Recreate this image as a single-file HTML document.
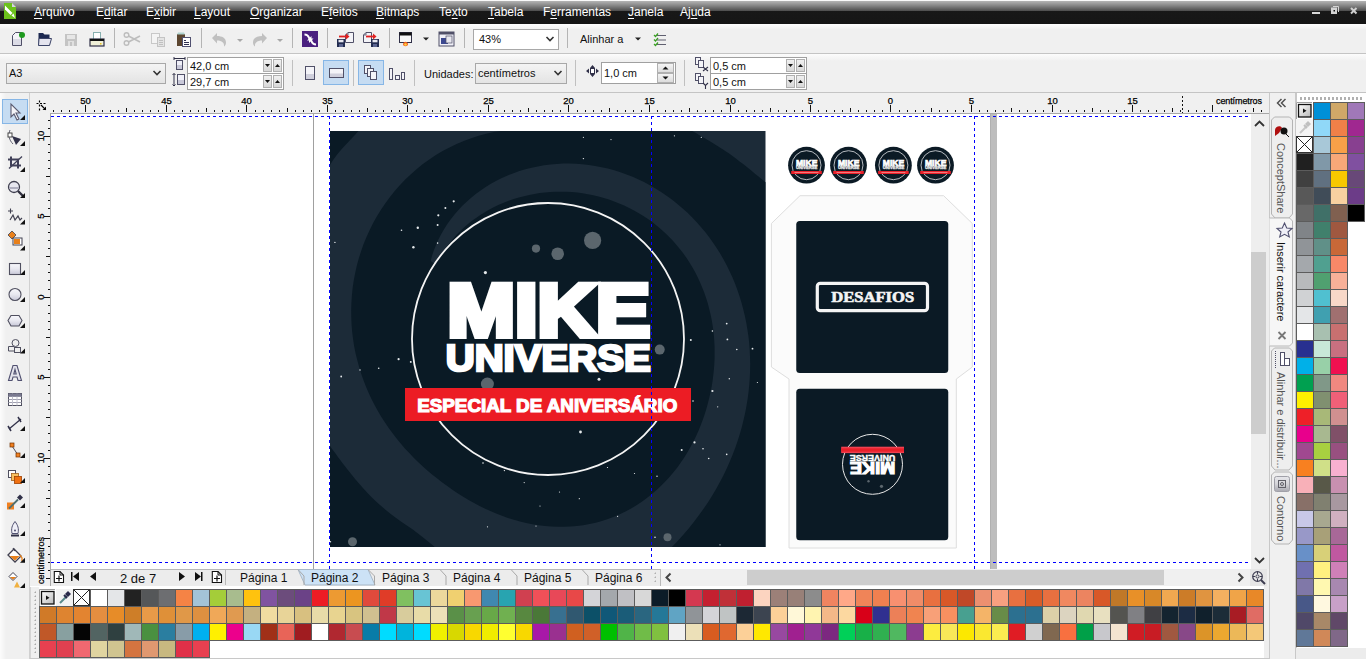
<!DOCTYPE html><html><head><meta charset="utf-8"><style>
html,body{margin:0;padding:0;} body{width:1366px;height:659px;overflow:hidden;position:relative;background:#f0f0f0;font-family:"Liberation Sans", sans-serif;}
div,svg{box-sizing:border-box;} u{text-decoration:underline;text-underline-offset:1.5px;text-decoration-thickness:1px;}
</style></head><body>
<div style="position:absolute;left:0px;top:0px;width:1366px;height:24px;background:linear-gradient(#fafafa 0px,#fafafa 1px,#b4b4b4 1px,#8c8c8c 5px,#4c4c4c 11px,#181818 11px,#161616 24px);"></div>
<div style="position:absolute;left:34px;top:5px;font-size:12px;line-height:14px;color:#ffffff;white-space:nowrap;line-height:14px;"><u>A</u>rquivo</div>
<div style="position:absolute;left:96px;top:5px;font-size:12px;line-height:14px;color:#ffffff;white-space:nowrap;line-height:14px;">E<u>d</u>itar</div>
<div style="position:absolute;left:146px;top:5px;font-size:12px;line-height:14px;color:#ffffff;white-space:nowrap;line-height:14px;">E<u>x</u>ibir</div>
<div style="position:absolute;left:194px;top:5px;font-size:12px;line-height:14px;color:#ffffff;white-space:nowrap;line-height:14px;"><u>L</u>ayout</div>
<div style="position:absolute;left:250px;top:5px;font-size:12px;line-height:14px;color:#ffffff;white-space:nowrap;line-height:14px;"><u>O</u>rganizar</div>
<div style="position:absolute;left:321px;top:5px;font-size:12px;line-height:14px;color:#ffffff;white-space:nowrap;line-height:14px;">E<u>f</u>eitos</div>
<div style="position:absolute;left:376px;top:5px;font-size:12px;line-height:14px;color:#ffffff;white-space:nowrap;line-height:14px;"><u>B</u>itmaps</div>
<div style="position:absolute;left:439px;top:5px;font-size:12px;line-height:14px;color:#ffffff;white-space:nowrap;line-height:14px;">Te<u>x</u>to</div>
<div style="position:absolute;left:488px;top:5px;font-size:12px;line-height:14px;color:#ffffff;white-space:nowrap;line-height:14px;"><u>T</u>abela</div>
<div style="position:absolute;left:543px;top:5px;font-size:12px;line-height:14px;color:#ffffff;white-space:nowrap;line-height:14px;">F<u>e</u>rramentas</div>
<div style="position:absolute;left:628px;top:5px;font-size:12px;line-height:14px;color:#ffffff;white-space:nowrap;line-height:14px;"><u>J</u>anela</div>
<div style="position:absolute;left:680px;top:5px;font-size:12px;line-height:14px;color:#ffffff;white-space:nowrap;line-height:14px;">Aj<u>u</u>da</div>
<svg style="position:absolute;left:3px;top:3px;" width="16" height="18" viewBox="0 0 16 18"><path d="M1 0 H9 L13 4 V16 H1 Z" fill="#6cc21c"/><path d="M9 0 L13 4 H9 Z" fill="#d8d0e8"/><path d="M2 2.5 L9.5 10 L7.5 12 L2 6.5 Z" fill="#fff"/><path d="M3.5 3 L9 8.5" stroke="#6cc21c" stroke-width="0.9"/><path d="M8.5 12.5 L10.5 10.5 L12 15 Z" fill="#fff"/></svg>
<svg style="position:absolute;left:1308px;top:4px;" width="58" height="16" viewBox="0 0 58 16"><rect x="4" y="8" width="8" height="2" fill="#d8d8d8"/><rect x="23" y="3.5" width="6" height="6.5" fill="#d4d4d4"/><rect x="25.5" y="6" width="1.5" height="1.5" fill="#111"/><path d="M25 2.5 H30.5 V8" fill="none" stroke="#d4d4d4" stroke-width="1"/><path d="M43 4 L48.5 9.5 M48.5 4 L43 9.5" stroke="#d0d0d0" stroke-width="2"/></svg>
<div style="position:absolute;left:0px;top:24px;width:1366px;height:30px;background:linear-gradient(#fefefe 0px,#f0f0f0 6px,#f0f0f0 100%);border-bottom:1px solid #c4c4c4;"></div>
<div style="position:absolute;left:0px;top:54px;width:1366px;height:39px;background:linear-gradient(#fcfcfc 0px,#f0f0f0 7px,#f0f0f0 100%);border-bottom:1px solid #c4c4c4;"></div>
<svg style="position:absolute;left:0px;top:24px;" width="700" height="30" viewBox="0 0 700 30"><path d="M12.5 35.5 L15.5 32.5 H21.5 V45.5 H12.5 Z" transform="translate(0,-24)" fill="#f4f4f8" stroke="#505068" stroke-width="1"/><rect x="13" y="15" width="8" height="6" fill="#dcdce6"/><circle cx="22" cy="11" r="3" fill="#1e9a1e"/><path d="M38.5 9 H43 L44.5 10.5 H49.5 V21.5 H38.5 Z" fill="#1c2850"/><path d="M39 14.5 H51.5 L49.5 21.5 H38.5 Z" fill="#e4e4ee" stroke="#3c4468" stroke-width="1"/><rect x="65" y="10" width="12" height="12" fill="#c4c4c4"/><rect x="67" y="11" width="8" height="4" fill="#e6e6e6"/><rect x="68" y="17" width="6" height="5" fill="#e0e0e0"/><rect x="70" y="18" width="2" height="4" fill="#c4c4c4"/><rect x="93.5" y="8.5" width="7" height="7" fill="#fff" stroke="#88b0b0" stroke-width="1"/><rect x="90" y="15" width="14" height="7" fill="#f0f0d8" stroke="#303048" stroke-width="1.2"/><rect x="90" y="15" width="14" height="2" fill="#111"/><rect x="100" y="19" width="1.5" height="1.5" fill="#e8c020"/><rect x="114" y="4" width="1" height="20" fill="#b4b4b4"/><circle cx="126.5" cy="11" r="2.3" fill="none" stroke="#bdbdbd" stroke-width="1.4"/><circle cx="126.5" cy="19" r="2.3" fill="none" stroke="#bdbdbd" stroke-width="1.4"/><path d="M128.5 12 L140 18 M128.5 18 L140 12" stroke="#bdbdbd" stroke-width="1.6"/><rect x="151.5" y="9.5" width="8" height="10" fill="#f4f4f4" stroke="#c8c8c8"/><rect x="157.5" y="13.5" width="7" height="9" fill="#e4e4e4" stroke="#c4c4c4"/><path d="M159 16.5 H163 M159 18.5 H163 M159 20.5 H163" stroke="#c0c0c0"/><rect x="177" y="10" width="8" height="12" fill="#5c4630"/><path d="M178 8.5 H184 L185 10.5 H177 Z" fill="#b0d4d0"/><rect x="182.5" y="13.5" width="8" height="9" fill="#fff" stroke="#505070" stroke-width="1"/><path d="M184 16.5 H186 M184 18.5 H189 M184 20.5 H189" stroke="#303050"/><rect x="201" y="4" width="1" height="20" fill="#b4b4b4"/><path d="M212 14 L217 9 V12 C222 12 226 14 226 18.5 C226 20.5 225 22 224 22.5 C224.5 19 222 16.5 217 16.5 V19.5 Z" fill="#c0c0c0"/><path d="M237 15 H243 L240 18 Z" fill="#a8a8a8"/><path d="M267 14 L262 9 V12 C257 12 253 14 253 18.5 C253 20.5 254 22 255 22.5 C254.5 19 257 16.5 262 16.5 V19.5 Z" fill="#c0c0c0"/><path d="M277 15 H283 L280 18 Z" fill="#a8a8a8"/><rect x="292" y="4" width="1" height="20" fill="#b4b4b4"/><rect x="302" y="7" width="16" height="16" fill="#4a2080"/><path d="M304.5 9.5 C307 9.5 309 11 310 13.5 L311.5 12 L311.5 16.5 L307 16.5 L308.5 15 C307.5 12.5 306.5 11.5 304.5 11.5 Z" fill="#fff"/><path d="M315.5 20.5 C313 20.5 311 19 310 16.5 L308.5 18 L308.5 13.5 L313 13.5 L311.5 15 C312.5 17.5 313.5 18.5 315.5 18.5 Z" fill="#fff" transform="translate(0.5,1)"/><rect x="327" y="4" width="1" height="20" fill="#b4b4b4"/><path d="M345.5 11 L348 8.5 H353.5 V18.5 H345.5 Z" fill="#f4f4f8" stroke="#505068" stroke-width="1"/><path d="M345.5 11 H348 V8.5" fill="none" stroke="#505068" stroke-width="0.8"/><rect x="337" y="15" width="8" height="8" fill="#222c50"/><rect x="338.5" y="15.8" width="5" height="2.5" fill="#e8e8f0"/><rect x="339" y="20" width="4" height="3" fill="#5a6490"/><path d="M339 12.5 H347" stroke="#e02020" stroke-width="1.8"/><path d="M346 9.5 L349.5 12.5 L346 15.5 Z" fill="#e02020"/><path d="M363.5 11 L366 8.5 H371.5 V18.5 H363.5 Z" fill="#f4f4f8" stroke="#505068" stroke-width="1"/><path d="M363.5 11 H366 V8.5" fill="none" stroke="#505068" stroke-width="0.8"/><rect x="371" y="15" width="8" height="8" fill="#222c50"/><rect x="372.5" y="15.8" width="5" height="2.5" fill="#e8e8f0"/><rect x="373" y="20" width="4" height="3" fill="#5a6490"/><path d="M366 12.5 H374" stroke="#e02020" stroke-width="1.8"/><path d="M373 9.5 L376.5 12.5 L373 15.5 Z" fill="#e02020"/><rect x="389" y="4" width="1" height="20" fill="#b4b4b4"/><rect x="399.5" y="8.5" width="12" height="10" fill="#f8f8f8" stroke="#303048" stroke-width="1"/><rect x="399.5" y="8.5" width="12" height="3" fill="#111"/><path d="M403 20 C404 17 407 17 408 20 C408 23 403 23 403 20 Z" fill="#f06020"/><circle cx="405.5" cy="20.5" r="1.3" fill="#ffd040"/><path d="M423 13.5 H429 L426 16.5 Z" fill="#222"/><rect x="439" y="8" width="15" height="14" fill="#f0f0f8" stroke="#505068" stroke-width="1"/><rect x="439" y="8" width="15" height="2.5" fill="#505068"/><rect x="441" y="14" width="7" height="6" fill="#3c4890"/><rect x="446" y="12" width="6" height="7" fill="#e8e8f0" stroke="#505068" stroke-width="0.7"/><rect x="464" y="4" width="1" height="20" fill="#b4b4b4"/><rect x="567" y="4" width="1" height="20" fill="#b4b4b4"/><path d="M635 13.5 H641 L638 16.5 Z" fill="#222"/><path d="M654 11 L655.5 12.5 L658 9.5 M654 15.5 L655.5 17 L658 14 M654 20 L655.5 21.5 L658 18.5" fill="none" stroke="#38a020" stroke-width="1.2"/><path d="M657 11.5 H666 M657 16 H666 M657 20.5 H666" stroke="#606070" stroke-width="1"/></svg>
<div style="position:absolute;left:473px;top:29px;width:86px;height:21px;background:#fff;border:1px solid #a8a8a8;"></div>
<div style="position:absolute;left:479px;top:32px;font-size:11px;line-height:13px;color:#111;white-space:nowrap;line-height:14px;">43%</div>
<svg style="position:absolute;left:545px;top:34px;" width="10" height="10" viewBox="0 0 10 10"><path d="M1.5 3 L5 6.5 L8.5 3" fill="none" stroke="#333" stroke-width="1.6"/></svg>
<div style="position:absolute;left:580px;top:32px;font-size:11px;line-height:13px;color:#111;white-space:nowrap;line-height:14px;">Alinhar a</div>
<div style="position:absolute;left:6px;top:63px;width:160px;height:21px;background:linear-gradient(#f4f4f4,#e4e4e4);border:1px solid #a8a8a8;"></div><div style="position:absolute;left:9px;top:66px;font-size:11px;line-height:13px;color:#111;white-space:nowrap;line-height:14px;">A3</div><svg style="position:absolute;left:152px;top:69px;" width="10" height="8" viewBox="0 0 10 8"><path d="M1.5 2 L5 5.5 L8.5 2" fill="none" stroke="#333" stroke-width="1.6"/></svg>
<div style="position:absolute;left:187px;top:57px;width:97px;height:33px;background:#fff;border:1px solid #a0a0a0;"></div><div style="position:absolute;left:187px;top:73px;width:97px;height:1px;background:#a0a0a0;"></div><div style="position:absolute;left:190px;top:59px;font-size:11px;line-height:13px;color:#111;white-space:nowrap;line-height:14px;">42,0 cm</div><div style="position:absolute;left:190px;top:75px;font-size:11px;line-height:13px;color:#111;white-space:nowrap;line-height:14px;">29,7 cm</div><div style="position:absolute;left:263px;top:59px;width:9px;height:13px;background:linear-gradient(#f0f0f0,#d8d8d8);border:1px solid #b0b0b0;"></div><div style="position:absolute;left:273px;top:59px;width:9px;height:13px;background:linear-gradient(#f0f0f0,#d8d8d8);border:1px solid #b0b0b0;"></div><svg style="position:absolute;left:263px;top:59px;" width="20" height="13" viewBox="0 0 20 13"><path d="M2 5 H7 L4.5 8 Z" fill="#111"/><path d="M12 8 H17 L14.5 5 Z" fill="#111"/></svg><div style="position:absolute;left:263px;top:75px;width:9px;height:13px;background:linear-gradient(#f0f0f0,#d8d8d8);border:1px solid #b0b0b0;"></div><div style="position:absolute;left:273px;top:75px;width:9px;height:13px;background:linear-gradient(#f0f0f0,#d8d8d8);border:1px solid #b0b0b0;"></div><svg style="position:absolute;left:263px;top:75px;" width="20" height="13" viewBox="0 0 20 13"><path d="M2 5 H7 L4.5 8 Z" fill="#111"/><path d="M12 8 H17 L14.5 5 Z" fill="#111"/></svg>
<div style="position:absolute;left:710px;top:57px;width:97px;height:33px;background:#fff;border:1px solid #a0a0a0;"></div><div style="position:absolute;left:710px;top:73px;width:97px;height:1px;background:#a0a0a0;"></div><div style="position:absolute;left:713px;top:59px;font-size:11px;line-height:13px;color:#111;white-space:nowrap;line-height:14px;">0,5 cm</div><div style="position:absolute;left:713px;top:75px;font-size:11px;line-height:13px;color:#111;white-space:nowrap;line-height:14px;">0,5 cm</div><div style="position:absolute;left:786px;top:59px;width:9px;height:13px;background:linear-gradient(#f0f0f0,#d8d8d8);border:1px solid #b0b0b0;"></div><div style="position:absolute;left:796px;top:59px;width:9px;height:13px;background:linear-gradient(#f0f0f0,#d8d8d8);border:1px solid #b0b0b0;"></div><svg style="position:absolute;left:786px;top:59px;" width="20" height="13" viewBox="0 0 20 13"><path d="M2 5 H7 L4.5 8 Z" fill="#111"/><path d="M12 8 H17 L14.5 5 Z" fill="#111"/></svg><div style="position:absolute;left:786px;top:75px;width:9px;height:13px;background:linear-gradient(#f0f0f0,#d8d8d8);border:1px solid #b0b0b0;"></div><div style="position:absolute;left:796px;top:75px;width:9px;height:13px;background:linear-gradient(#f0f0f0,#d8d8d8);border:1px solid #b0b0b0;"></div><svg style="position:absolute;left:786px;top:75px;" width="20" height="13" viewBox="0 0 20 13"><path d="M2 5 H7 L4.5 8 Z" fill="#111"/><path d="M12 8 H17 L14.5 5 Z" fill="#111"/></svg>
<svg style="position:absolute;left:0px;top:54px;" width="820" height="38" viewBox="0 0 820 38"><rect x="176.5" y="6.5" width="6" height="9" fill="#f0f0f8" stroke="#505068" stroke-width="1"/><rect x="177" y="11" width="5" height="4" fill="#c8c8d8"/><path d="M174 4.5 H185 M174 3 V6 M185 3 V6" stroke="#303048" stroke-width="1"/><rect x="177.5" y="20.5" width="7" height="10" fill="#f0f0f8" stroke="#505068" stroke-width="1"/><rect x="178" y="26" width="6" height="4" fill="#c8c8d8"/><path d="M174 19.5 V32 M172.5 21 L174 19.5 L175.5 21 M172.5 30.5 L174 32 L175.5 30.5" fill="none" stroke="#303048" stroke-width="1"/><rect x="292" y="6" width="1" height="26" fill="#c0c0c0"/><rect x="305.5" y="12.5" width="9" height="13" fill="#f4f4f8" stroke="#505068" stroke-width="1"/><rect x="306" y="20" width="8" height="5" fill="#d0d0dc"/><rect x="323.5" y="6.5" width="25" height="24" fill="#c6dcf2" stroke="#86b6e6" stroke-width="1"/><rect x="329.5" y="14.5" width="14" height="9" fill="#f4f4f8" stroke="#505068" stroke-width="1"/><rect x="330" y="19.5" width="13" height="3.5" fill="#d0d0dc"/><rect x="353" y="6" width="1" height="26" fill="#c0c0c0"/><rect x="358.5" y="6.5" width="25" height="24" fill="#c6dcf2" stroke="#86b6e6" stroke-width="1"/><rect x="364.5" y="11.5" width="6" height="8" fill="#f4f4f8" stroke="#505068"/><rect x="367.5" y="14.5" width="6" height="8" fill="#f4f4f8" stroke="#505068"/><rect x="370.5" y="17.5" width="6" height="8" fill="#f4f4f8" stroke="#505068"/><rect x="389.5" y="14.5" width="3" height="11" fill="#f4f4f8" stroke="#505068"/><rect x="395.5" y="21.5" width="4" height="4" fill="#f4f4f8" stroke="#505068"/><rect x="401.5" y="18.5" width="3" height="7" fill="#f4f4f8" stroke="#505068"/><rect x="414" y="6" width="1" height="26" fill="#c0c0c0"/><rect x="575" y="6" width="1" height="26" fill="#c0c0c0"/><path d="M592.5 11 L590 14 H595 Z M592.5 23 L590 20 H595 Z M586 17 L589 14.5 V19.5 Z M599 17 L596 14.5 V19.5 Z" fill="#303048"/><rect x="590.5" y="14.5" width="4" height="5" fill="#fff" stroke="#303048" stroke-width="1"/><rect x="684" y="6" width="1" height="26" fill="#c0c0c0"/><rect x="695.5" y="3.5" width="5" height="7" fill="#f4f4f8" stroke="#505068"/><rect x="698.5" y="6.5" width="5" height="7" fill="#f4f4f8" stroke="#505068"/><rect x="695.5" y="19.5" width="5" height="7" fill="#f4f4f8" stroke="#505068"/><rect x="698.5" y="22.5" width="5" height="7" fill="#f4f4f8" stroke="#505068"/><path d="M703 13 L708 17 M708 13 L703 17" stroke="#303048" stroke-width="1.1"/><path d="M703 29 L705.5 31.5 L708 29 M705.5 31.5 V35" fill="none" stroke="#303048" stroke-width="1.1"/></svg>
<div style="position:absolute;left:424px;top:67px;font-size:11px;line-height:13px;color:#111;white-space:nowrap;line-height:14px;">Unidades:</div>
<div style="position:absolute;left:475px;top:63px;width:92px;height:21px;background:linear-gradient(#f4f4f4,#e4e4e4);border:1px solid #a8a8a8;"></div><div style="position:absolute;left:478px;top:66px;font-size:11px;line-height:13px;color:#111;white-space:nowrap;line-height:14px;">centímetros</div><svg style="position:absolute;left:553px;top:69px;" width="10" height="8" viewBox="0 0 10 8"><path d="M1.5 2 L5 5.5 L8.5 2" fill="none" stroke="#333" stroke-width="1.6"/></svg>
<div style="position:absolute;left:601px;top:62px;width:75px;height:22px;background:#fff;border:1px solid #a0a0a0;"></div>
<div style="position:absolute;left:604px;top:66px;font-size:11px;line-height:13px;color:#111;white-space:nowrap;line-height:14px;">1,0 cm</div>
<div style="position:absolute;left:657px;top:63px;width:17px;height:10px;background:linear-gradient(#f4f4f4,#dcdcdc);border:1px solid #b0b0b0;"></div>
<div style="position:absolute;left:657px;top:73px;width:17px;height:10px;background:linear-gradient(#f4f4f4,#dcdcdc);border:1px solid #b0b0b0;"></div>
<svg style="position:absolute;left:657px;top:63px;" width="17" height="20" viewBox="0 0 17 20"><path d="M5.5 6.5 H11.5 L8.5 3.5 Z" fill="#111"/><path d="M5.5 13.5 H11.5 L8.5 16.5 Z" fill="#111"/></svg>
<div style="position:absolute;left:0px;top:93px;width:30px;height:566px;background:linear-gradient(90deg,#fcfcfc 0px,#f0f0f0 6px,#f0f0f0 100%);border-right:1px solid #d0d0d0;"></div>
<svg style="position:absolute;left:0px;top:93px;" width="29" height="500" viewBox="0 0 29 500"><defs><linearGradient id="tbg" x1="0" y1="0" x2="0" y2="1"><stop offset="0" stop-color="#f8f8fc"/><stop offset="0.5" stop-color="#e8e8f0"/><stop offset="1" stop-color="#c8c8d8"/></linearGradient></defs><rect x="2.5" y="6.5" width="25" height="24" fill="#c6dcf2" stroke="#86b6e6" stroke-width="1"/><path d="M11 11 L11 24 L14 21 L17 27 L19 26 L16 20 L20 20 Z" fill="#f4f4f8" stroke="#5a5a70" stroke-width="1.1"/><path d="M25 27 H20 L25 22 Z" fill="#111"/><path d="M10 37 C8 42 9 47 13 51" fill="none" stroke="#606070" stroke-width="1"/><rect x="8" y="40" width="4" height="4" fill="#fff" stroke="#444" stroke-width="1"/><path d="M12 43 L21 46 L16 52 Z" fill="#303048"/><path d="M25 53 H20 L25 48 Z" fill="#111"/><g transform="translate(0,2.5)"><path d="M11 61 V70 H21 M8 64 H18 V73" fill="none" stroke="#404058" stroke-width="2"/><path d="M9 73 L22 61" stroke="#404058" stroke-width="1.3"/></g><path d="M25 79 H20 L25 74 Z" fill="#111"/><circle cx="14" cy="94" r="5.5" fill="#e8e8f0" stroke="#404050" stroke-width="1.3"/><path d="M9 95 H19" stroke="#b0b0c0" stroke-width="2"/><path d="M18 98 L23 103" stroke="#303040" stroke-width="2.4"/><path d="M25 105 H20 L25 100 Z" fill="#111"/><path d="M8 118 H13 M10.5 115.5 V120.5" stroke="#404050" stroke-width="1.1"/><path d="M10 127 L13 122 L15 127 L18 123 L20 127 L22 125" fill="none" stroke="#404050" stroke-width="1.2"/><path d="M25 131.5 H20 L25 126.5 Z" fill="#111"/><path d="M8 142 L12 138 L16 142 L12 146 Z" fill="#e8801a" stroke="#404050" stroke-width="0.8"/><rect x="13" y="145" width="9" height="7" fill="#fff" stroke="#404050" stroke-width="1"/><rect x="14" y="146" width="6" height="5" fill="#e8801a"/><path d="M25 157.5 H20 L25 152.5 Z" fill="#111"/><rect x="9.5" y="170.5" width="11" height="11" fill="url(#tbg)" stroke="#505060" stroke-width="1.1"/><path d="M25 182 H20 L25 177 Z" fill="#111"/><circle cx="15" cy="201.5" r="6" fill="url(#tbg)" stroke="#505060" stroke-width="1.1"/><path d="M25 209 H20 L25 204 Z" fill="#111"/><path d="M11 222.5 H19 L22 227.5 L19 233 H11 L8 227.5 Z" fill="url(#tbg)" stroke="#505060" stroke-width="1.1"/><path d="M25 235 H20 L25 230 Z" fill="#111"/><circle cx="15.5" cy="250" r="3.5" fill="#eee" stroke="#505060" stroke-width="1"/><path d="M8.5 253.5 H14 L16 258 H8.5 Z" fill="#eee" stroke="#505060" stroke-width="1"/><rect x="14.5" y="254.5" width="6" height="5" fill="#eee" stroke="#505060" stroke-width="1"/><path d="M25 260.5 H20 L25 255.5 Z" fill="#111"/><path d="M8.5 287.5 L13 272.5 H17 L21.5 287.5 H18 L17 284 H13 L12 287.5 Z M13.8 281 H16.2 L15 276.5 Z" fill="#e4e4ec" stroke="#505070" stroke-width="1.1"/><rect x="8.5" y="300.5" width="13" height="12" fill="#fff" stroke="#505060" stroke-width="1"/><path d="M8.5 303.5 H21.5 M8.5 306.5 H21.5 M8.5 309.5 H21.5" stroke="#a0a0b0" stroke-width="1"/><path d="M12.5 300.5 V312.5 M17 300.5 V312.5" stroke="#c0c0cc" stroke-width="1"/><rect x="8.5" y="300.5" width="13" height="3" fill="#7a7a90"/><g transform="translate(0,1)"><path d="M9 335 L21 325" stroke="#303048" stroke-width="1.3"/><path d="M8 332 L11 337 M18 323 L21 328" stroke="#303048" stroke-width="1.5"/><path d="M25 337 H20 L25 332 Z" fill="#111"/></g><g transform="translate(0,3)"><path d="M12 350 L18 359" stroke="#505060" stroke-width="1"/><rect x="10" y="347" width="4" height="4" fill="#f08020" stroke="#703000" stroke-width="0.7"/><rect x="16" y="357" width="4" height="4" fill="#f08020" stroke="#703000" stroke-width="0.7"/><path d="M25 362 H20 L25 357 Z" fill="#111"/></g><g transform="translate(0,2)"><rect x="8.5" y="375.5" width="7" height="7" fill="#fff" stroke="#505060" stroke-width="1"/><rect x="11.5" y="378.5" width="7" height="7" fill="#f8c060" stroke="#a06020" stroke-width="0.8"/><rect x="14.5" y="381.5" width="7" height="7" fill="#f07010" stroke="#a04000" stroke-width="0.8"/><path d="M25 388 H20 L25 383 Z" fill="#111"/></g><g transform="translate(0,7.5)"><rect x="7" y="402" width="7" height="7" fill="#f08020"/><path d="M9 408 L18 399" stroke="#507070" stroke-width="1.8"/><path d="M17 397 L20 394 L23 397 L20 400 Z" fill="#303048"/><path d="M25 407.5 H20 L25 402.5 Z" fill="#111"/></g><g transform="translate(0,7.5)"><path d="M15 421 C12 425 11 428 12 433 H18 C19 428 18 425 15 421 Z" fill="#f0f0f8" stroke="#505070" stroke-width="1"/><circle cx="15" cy="430" r="1" fill="#505070"/><rect x="11" y="434" width="8" height="2" fill="#303048"/><path d="M25 435.5 H20 L25 430.5 Z" fill="#111"/></g><g transform="translate(0,7)"><path d="M8 455 L14 449 L21 456 L15 462 Z" fill="#fff" stroke="#404050" stroke-width="1.3"/><path d="M9.5 456 H19.5 L15 460.5 Z" fill="#e8801a"/><path d="M20 455 L22 458 V461" stroke="#e8801a" stroke-width="1.3" fill="none"/><path d="M13 448 L15 451" stroke="#404050" stroke-width="1.2"/><path d="M25 462.7 H20 L25 457.7 Z" fill="#111"/></g><g transform="translate(0,6.5)"><path d="M9 477 L13 473 L17 477 L13 481 Z" fill="#fff" stroke="#404050" stroke-width="1"/><path d="M10 477.5 H16 L13 480 Z" fill="#e8801a"/><path d="M14 488 L17 482 L20 488 Z" fill="#f0b040"/><path d="M25 488.5 H20 L25 483.5 Z" fill="#111"/></g></svg>
<div style="position:absolute;left:30px;top:93px;width:1239px;height:21px;background:#f0f0f0;border-bottom:1px solid #a8a8a8;"></div>
<div style="position:absolute;left:30px;top:113px;width:21px;height:473px;background:#f0f0f0;border-right:1px solid #a8a8a8;"></div>
<svg style="position:absolute;left:30px;top:93px;" width="1239" height="20" viewBox="0 0 1239 20"><rect x="23" y="17" width="1" height="2" fill="#111"/><rect x="31" y="17" width="1" height="2" fill="#111"/><rect x="39" y="17" width="1" height="2" fill="#111"/><rect x="47" y="17" width="1" height="2" fill="#111"/><rect x="55" y="12" width="1" height="7" fill="#111"/><text x="55.5" y="11" text-anchor="middle" font-family="Liberation Sans" font-size="9.5" fill="#000" stroke="#000" stroke-width="0.25">50</text><rect x="64" y="17" width="1" height="2" fill="#111"/><rect x="72" y="17" width="1" height="2" fill="#111"/><rect x="80" y="17" width="1" height="2" fill="#111"/><rect x="88" y="17" width="1" height="2" fill="#111"/><rect x="96" y="15" width="1" height="4" fill="#111"/><rect x="104" y="17" width="1" height="2" fill="#111"/><rect x="112" y="17" width="1" height="2" fill="#111"/><rect x="120" y="17" width="1" height="2" fill="#111"/><rect x="128" y="17" width="1" height="2" fill="#111"/><rect x="136" y="12" width="1" height="7" fill="#111"/><text x="136.5" y="11" text-anchor="middle" font-family="Liberation Sans" font-size="9.5" fill="#000" stroke="#000" stroke-width="0.25">45</text><rect x="144" y="17" width="1" height="2" fill="#111"/><rect x="152" y="17" width="1" height="2" fill="#111"/><rect x="160" y="17" width="1" height="2" fill="#111"/><rect x="168" y="17" width="1" height="2" fill="#111"/><rect x="176" y="15" width="1" height="4" fill="#111"/><rect x="184" y="17" width="1" height="2" fill="#111"/><rect x="192" y="17" width="1" height="2" fill="#111"/><rect x="200" y="17" width="1" height="2" fill="#111"/><rect x="208" y="17" width="1" height="2" fill="#111"/><rect x="216" y="12" width="1" height="7" fill="#111"/><text x="216.5" y="11" text-anchor="middle" font-family="Liberation Sans" font-size="9.5" fill="#000" stroke="#000" stroke-width="0.25">40</text><rect x="225" y="17" width="1" height="2" fill="#111"/><rect x="233" y="17" width="1" height="2" fill="#111"/><rect x="241" y="17" width="1" height="2" fill="#111"/><rect x="249" y="17" width="1" height="2" fill="#111"/><rect x="257" y="15" width="1" height="4" fill="#111"/><rect x="265" y="17" width="1" height="2" fill="#111"/><rect x="273" y="17" width="1" height="2" fill="#111"/><rect x="281" y="17" width="1" height="2" fill="#111"/><rect x="289" y="17" width="1" height="2" fill="#111"/><rect x="297" y="12" width="1" height="7" fill="#111"/><text x="297.5" y="11" text-anchor="middle" font-family="Liberation Sans" font-size="9.5" fill="#000" stroke="#000" stroke-width="0.25">35</text><rect x="305" y="17" width="1" height="2" fill="#111"/><rect x="313" y="17" width="1" height="2" fill="#111"/><rect x="321" y="17" width="1" height="2" fill="#111"/><rect x="329" y="17" width="1" height="2" fill="#111"/><rect x="337" y="15" width="1" height="4" fill="#111"/><rect x="345" y="17" width="1" height="2" fill="#111"/><rect x="353" y="17" width="1" height="2" fill="#111"/><rect x="361" y="17" width="1" height="2" fill="#111"/><rect x="369" y="17" width="1" height="2" fill="#111"/><rect x="377" y="12" width="1" height="7" fill="#111"/><text x="377.5" y="11" text-anchor="middle" font-family="Liberation Sans" font-size="9.5" fill="#000" stroke="#000" stroke-width="0.25">30</text><rect x="386" y="17" width="1" height="2" fill="#111"/><rect x="394" y="17" width="1" height="2" fill="#111"/><rect x="402" y="17" width="1" height="2" fill="#111"/><rect x="410" y="17" width="1" height="2" fill="#111"/><rect x="418" y="15" width="1" height="4" fill="#111"/><rect x="426" y="17" width="1" height="2" fill="#111"/><rect x="434" y="17" width="1" height="2" fill="#111"/><rect x="442" y="17" width="1" height="2" fill="#111"/><rect x="450" y="17" width="1" height="2" fill="#111"/><rect x="458" y="12" width="1" height="7" fill="#111"/><text x="458.5" y="11" text-anchor="middle" font-family="Liberation Sans" font-size="9.5" fill="#000" stroke="#000" stroke-width="0.25">25</text><rect x="466" y="17" width="1" height="2" fill="#111"/><rect x="474" y="17" width="1" height="2" fill="#111"/><rect x="482" y="17" width="1" height="2" fill="#111"/><rect x="490" y="17" width="1" height="2" fill="#111"/><rect x="498" y="15" width="1" height="4" fill="#111"/><rect x="506" y="17" width="1" height="2" fill="#111"/><rect x="514" y="17" width="1" height="2" fill="#111"/><rect x="522" y="17" width="1" height="2" fill="#111"/><rect x="530" y="17" width="1" height="2" fill="#111"/><rect x="538" y="12" width="1" height="7" fill="#111"/><text x="538.5" y="11" text-anchor="middle" font-family="Liberation Sans" font-size="9.5" fill="#000" stroke="#000" stroke-width="0.25">20</text><rect x="547" y="17" width="1" height="2" fill="#111"/><rect x="555" y="17" width="1" height="2" fill="#111"/><rect x="563" y="17" width="1" height="2" fill="#111"/><rect x="571" y="17" width="1" height="2" fill="#111"/><rect x="579" y="15" width="1" height="4" fill="#111"/><rect x="587" y="17" width="1" height="2" fill="#111"/><rect x="595" y="17" width="1" height="2" fill="#111"/><rect x="603" y="17" width="1" height="2" fill="#111"/><rect x="611" y="17" width="1" height="2" fill="#111"/><rect x="619" y="12" width="1" height="7" fill="#111"/><text x="619.5" y="11" text-anchor="middle" font-family="Liberation Sans" font-size="9.5" fill="#000" stroke="#000" stroke-width="0.25">15</text><rect x="627" y="17" width="1" height="2" fill="#111"/><rect x="635" y="17" width="1" height="2" fill="#111"/><rect x="643" y="17" width="1" height="2" fill="#111"/><rect x="651" y="17" width="1" height="2" fill="#111"/><rect x="659" y="15" width="1" height="4" fill="#111"/><rect x="667" y="17" width="1" height="2" fill="#111"/><rect x="675" y="17" width="1" height="2" fill="#111"/><rect x="683" y="17" width="1" height="2" fill="#111"/><rect x="691" y="17" width="1" height="2" fill="#111"/><rect x="700" y="12" width="1" height="7" fill="#111"/><text x="700.5" y="11" text-anchor="middle" font-family="Liberation Sans" font-size="9.5" fill="#000" stroke="#000" stroke-width="0.25">10</text><rect x="708" y="17" width="1" height="2" fill="#111"/><rect x="716" y="17" width="1" height="2" fill="#111"/><rect x="724" y="17" width="1" height="2" fill="#111"/><rect x="732" y="17" width="1" height="2" fill="#111"/><rect x="740" y="15" width="1" height="4" fill="#111"/><rect x="748" y="17" width="1" height="2" fill="#111"/><rect x="756" y="17" width="1" height="2" fill="#111"/><rect x="764" y="17" width="1" height="2" fill="#111"/><rect x="772" y="17" width="1" height="2" fill="#111"/><rect x="780" y="12" width="1" height="7" fill="#111"/><text x="780.5" y="11" text-anchor="middle" font-family="Liberation Sans" font-size="9.5" fill="#000" stroke="#000" stroke-width="0.25">5</text><rect x="788" y="17" width="1" height="2" fill="#111"/><rect x="796" y="17" width="1" height="2" fill="#111"/><rect x="804" y="17" width="1" height="2" fill="#111"/><rect x="812" y="17" width="1" height="2" fill="#111"/><rect x="820" y="15" width="1" height="4" fill="#111"/><rect x="828" y="17" width="1" height="2" fill="#111"/><rect x="836" y="17" width="1" height="2" fill="#111"/><rect x="844" y="17" width="1" height="2" fill="#111"/><rect x="852" y="17" width="1" height="2" fill="#111"/><rect x="860" y="12" width="1" height="7" fill="#111"/><text x="860.5" y="11" text-anchor="middle" font-family="Liberation Sans" font-size="9.5" fill="#000" stroke="#000" stroke-width="0.25">0</text><rect x="869" y="17" width="1" height="2" fill="#111"/><rect x="877" y="17" width="1" height="2" fill="#111"/><rect x="885" y="17" width="1" height="2" fill="#111"/><rect x="893" y="17" width="1" height="2" fill="#111"/><rect x="901" y="15" width="1" height="4" fill="#111"/><rect x="909" y="17" width="1" height="2" fill="#111"/><rect x="917" y="17" width="1" height="2" fill="#111"/><rect x="925" y="17" width="1" height="2" fill="#111"/><rect x="933" y="17" width="1" height="2" fill="#111"/><rect x="941" y="12" width="1" height="7" fill="#111"/><text x="941.5" y="11" text-anchor="middle" font-family="Liberation Sans" font-size="9.5" fill="#000" stroke="#000" stroke-width="0.25">5</text><rect x="949" y="17" width="1" height="2" fill="#111"/><rect x="957" y="17" width="1" height="2" fill="#111"/><rect x="965" y="17" width="1" height="2" fill="#111"/><rect x="973" y="17" width="1" height="2" fill="#111"/><rect x="981" y="15" width="1" height="4" fill="#111"/><rect x="989" y="17" width="1" height="2" fill="#111"/><rect x="997" y="17" width="1" height="2" fill="#111"/><rect x="1005" y="17" width="1" height="2" fill="#111"/><rect x="1013" y="17" width="1" height="2" fill="#111"/><rect x="1022" y="12" width="1" height="7" fill="#111"/><text x="1022.5" y="11" text-anchor="middle" font-family="Liberation Sans" font-size="9.5" fill="#000" stroke="#000" stroke-width="0.25">10</text><rect x="1030" y="17" width="1" height="2" fill="#111"/><rect x="1038" y="17" width="1" height="2" fill="#111"/><rect x="1046" y="17" width="1" height="2" fill="#111"/><rect x="1054" y="17" width="1" height="2" fill="#111"/><rect x="1062" y="15" width="1" height="4" fill="#111"/><rect x="1070" y="17" width="1" height="2" fill="#111"/><rect x="1078" y="17" width="1" height="2" fill="#111"/><rect x="1086" y="17" width="1" height="2" fill="#111"/><rect x="1094" y="17" width="1" height="2" fill="#111"/><rect x="1102" y="12" width="1" height="7" fill="#111"/><text x="1102.5" y="11" text-anchor="middle" font-family="Liberation Sans" font-size="9.5" fill="#000" stroke="#000" stroke-width="0.25">15</text><rect x="1110" y="17" width="1" height="2" fill="#111"/><rect x="1118" y="17" width="1" height="2" fill="#111"/><rect x="1126" y="17" width="1" height="2" fill="#111"/><rect x="1134" y="17" width="1" height="2" fill="#111"/><rect x="1142" y="15" width="1" height="4" fill="#111"/><rect x="1150" y="17" width="1" height="2" fill="#111"/><rect x="1158" y="17" width="1" height="2" fill="#111"/><rect x="1166" y="17" width="1" height="2" fill="#111"/><rect x="1174" y="17" width="1" height="2" fill="#111"/><rect x="1182" y="12" width="1" height="7" fill="#111"/><text x="1182.5" y="11" text-anchor="middle" font-family="Liberation Sans" font-size="9.5" fill="#000" stroke="#000" stroke-width="0.25"></text><rect x="1191" y="17" width="1" height="2" fill="#111"/><rect x="1199" y="17" width="1" height="2" fill="#111"/><rect x="1207" y="17" width="1" height="2" fill="#111"/><rect x="1215" y="17" width="1" height="2" fill="#111"/><rect x="1223" y="15" width="1" height="4" fill="#111"/><rect x="1231" y="17" width="1" height="2" fill="#111"/></svg>
<svg style="position:absolute;left:35px;top:99px;" width="14" height="14" viewBox="0 0 14 14"><path d="M1.5 4.5 H12" stroke="#000" stroke-width="1.2" stroke-dasharray="2 1.5"/><path d="M4.5 1.5 V12" stroke="#000" stroke-width="1.2" stroke-dasharray="2 2"/><path d="M6 6 L10.8 10.8" stroke="#000" stroke-width="1.2"/><path d="M11 7.5 V11 H7.5 Z" fill="#000"/></svg>
<div style="position:absolute;left:1216px;top:96px;font-size:9px;line-height:11px;color:#000;white-space:nowrap;line-height:11px;-webkit-text-stroke:0.25px #000;letter-spacing:-0.1px;">centímetros</div>
<div style="position:absolute;left:1182px;top:96px;width:1px;height:17px;background:repeating-linear-gradient(180deg,#111 0 2px,transparent 2px 4px);"></div>
<svg style="position:absolute;left:30px;top:113px;" width="21" height="473" viewBox="0 0 21 473"><rect x="16" y="465" width="4" height="1" fill="#111"/><rect x="18" y="457" width="2" height="1" fill="#111"/><rect x="18" y="449" width="2" height="1" fill="#111"/><rect x="18" y="441" width="2" height="1" fill="#111"/><rect x="18" y="433" width="2" height="1" fill="#111"/><rect x="14" y="425" width="6" height="1" fill="#111"/><rect x="18" y="417" width="2" height="1" fill="#111"/><rect x="18" y="409" width="2" height="1" fill="#111"/><rect x="18" y="401" width="2" height="1" fill="#111"/><rect x="18" y="393" width="2" height="1" fill="#111"/><rect x="16" y="385" width="4" height="1" fill="#111"/><rect x="18" y="377" width="2" height="1" fill="#111"/><rect x="18" y="369" width="2" height="1" fill="#111"/><rect x="18" y="361" width="2" height="1" fill="#111"/><rect x="18" y="353" width="2" height="1" fill="#111"/><rect x="14" y="345" width="6" height="1" fill="#111"/><text transform="translate(13.5,345) rotate(-90)" text-anchor="middle" font-family="Liberation Sans" font-size="9.5" fill="#000" stroke="#000" stroke-width="0.25">10</text><rect x="18" y="337" width="2" height="1" fill="#111"/><rect x="18" y="329" width="2" height="1" fill="#111"/><rect x="18" y="320" width="2" height="1" fill="#111"/><rect x="18" y="312" width="2" height="1" fill="#111"/><rect x="16" y="304" width="4" height="1" fill="#111"/><rect x="18" y="296" width="2" height="1" fill="#111"/><rect x="18" y="288" width="2" height="1" fill="#111"/><rect x="18" y="280" width="2" height="1" fill="#111"/><rect x="18" y="272" width="2" height="1" fill="#111"/><rect x="14" y="264" width="6" height="1" fill="#111"/><text transform="translate(13.5,264) rotate(-90)" text-anchor="middle" font-family="Liberation Sans" font-size="9.5" fill="#000" stroke="#000" stroke-width="0.25">5</text><rect x="18" y="256" width="2" height="1" fill="#111"/><rect x="18" y="248" width="2" height="1" fill="#111"/><rect x="18" y="240" width="2" height="1" fill="#111"/><rect x="18" y="232" width="2" height="1" fill="#111"/><rect x="16" y="224" width="4" height="1" fill="#111"/><rect x="18" y="216" width="2" height="1" fill="#111"/><rect x="18" y="208" width="2" height="1" fill="#111"/><rect x="18" y="200" width="2" height="1" fill="#111"/><rect x="18" y="192" width="2" height="1" fill="#111"/><rect x="14" y="184" width="6" height="1" fill="#111"/><text transform="translate(13.5,184) rotate(-90)" text-anchor="middle" font-family="Liberation Sans" font-size="9.5" fill="#000" stroke="#000" stroke-width="0.25">0</text><rect x="18" y="176" width="2" height="1" fill="#111"/><rect x="18" y="167" width="2" height="1" fill="#111"/><rect x="18" y="159" width="2" height="1" fill="#111"/><rect x="18" y="151" width="2" height="1" fill="#111"/><rect x="16" y="143" width="4" height="1" fill="#111"/><rect x="18" y="135" width="2" height="1" fill="#111"/><rect x="18" y="127" width="2" height="1" fill="#111"/><rect x="18" y="119" width="2" height="1" fill="#111"/><rect x="18" y="111" width="2" height="1" fill="#111"/><rect x="14" y="103" width="6" height="1" fill="#111"/><text transform="translate(13.5,103) rotate(-90)" text-anchor="middle" font-family="Liberation Sans" font-size="9.5" fill="#000" stroke="#000" stroke-width="0.25">5</text><rect x="18" y="95" width="2" height="1" fill="#111"/><rect x="18" y="87" width="2" height="1" fill="#111"/><rect x="18" y="79" width="2" height="1" fill="#111"/><rect x="18" y="71" width="2" height="1" fill="#111"/><rect x="16" y="63" width="4" height="1" fill="#111"/><rect x="18" y="55" width="2" height="1" fill="#111"/><rect x="18" y="47" width="2" height="1" fill="#111"/><rect x="18" y="39" width="2" height="1" fill="#111"/><rect x="18" y="31" width="2" height="1" fill="#111"/><rect x="14" y="23" width="6" height="1" fill="#111"/><text transform="translate(13.5,23) rotate(-90)" text-anchor="middle" font-family="Liberation Sans" font-size="9.5" fill="#000" stroke="#000" stroke-width="0.25">10</text><rect x="18" y="15" width="2" height="1" fill="#111"/><rect x="18" y="7" width="2" height="1" fill="#111"/><text transform="translate(13.5,471) rotate(-90)" text-anchor="start" font-family="Liberation Sans" font-size="9" fill="#000" stroke="#000" stroke-width="0.25">centímetros</text></svg>
<div style="position:absolute;left:51px;top:114px;width:1200px;height:455px;background:#ffffff;"></div>
<div style="position:absolute;left:313px;top:114px;width:1px;height:455px;background:#a0a0a0;"></div>
<div style="position:absolute;left:990px;top:114px;width:7px;height:455px;background:#bdbdbd;border-left:1px solid #b0b0b0;"></div>
<svg style="position:absolute;left:330px;top:131px;" width="435.5" height="416" viewBox="0 0 435.5 416"><rect width="435.5" height="416" fill="#1c2b38"/><path d="M187.0,-1.5 L179.3,-1.0 L171.5,-0.1 L163.8,1.1 L156.2,2.8 L148.6,4.8 L141.2,7.2 L133.8,9.9 L126.6,13.0 L119.5,16.4 L112.6,20.1 L105.9,24.1 L99.3,28.5 L92.9,33.1 L86.8,38.0 L80.9,43.2 L75.2,48.6 L69.8,54.3 L64.7,60.1 L59.8,66.2 L55.2,72.5 L50.8,78.9 L46.8,85.5 L43.0,92.3 L39.6,99.2 L36.4,106.2 L33.5,113.3 L31.0,120.5 L28.7,127.7 L26.7,135.0 L25.1,142.4 L23.7,149.8 L22.6,157.2 L21.9,164.6 L21.4,172.0 L21.2,179.3 L21.3,186.7 L21.6,193.9 L22.2,201.2 L23.1,208.3 L24.2,215.4 L25.6,222.4 L27.3,229.3 L29.1,236.1 L31.2,242.7 L33.5,249.3 L36.0,255.7 L38.7,262.1 L41.6,268.2 L44.7,274.3 L48.0,280.2 L51.4,285.9 L55.0,291.5 L58.7,297.0 L62.6,302.3 L66.6,307.5 L70.7,312.5 L74.9,317.4 L79.3,322.1 L83.7,326.7 L88.3,331.2 L92.9,335.5 L97.6,339.7 L102.4,343.7 L107.3,347.6 L112.3,351.4 L117.3,355.1 L122.4,358.7 L127.6,362.2 L132.8,365.5 L138.2,368.7 L143.6,371.7 L149.1,374.7 L154.7,377.4 L160.4,380.1 L166.1,382.5 L172.0,384.8 L177.9,386.9 L183.9,388.8 L190.0,390.4 L196.2,391.9 L202.4,393.2 L208.6,394.2 L215.0,395.0 L221.3,395.5 L227.7,395.8 L234.1,395.8 L240.4,395.6 L246.8,395.0 L253.2,394.2 L259.5,393.1 L265.7,391.7 L271.9,390.0 L277.9,388.0 L283.9,385.8 L289.8,383.3 L295.5,380.5 L301.1,377.4 L306.5,374.2 L311.8,370.7 L316.9,367.0 L321.8,363.1 L326.6,359.0 L331.1,354.7 L335.5,350.3 L339.7,345.7 L343.7,341.0 L347.5,336.2 L351.0,331.3 L354.4,326.2 L357.6,321.1 L360.6,315.8 L363.4,310.5 L366.0,305.2 L368.5,299.8 L370.7,294.3 L372.8,288.8 L374.7,283.3 L376.4,277.7 L377.9,272.2 L379.3,266.6 L380.6,261.0 L381.7,255.4 L382.6,249.7 L383.3,244.1 L383.9,238.5 L384.3,232.9 L384.6,227.2 L384.6,221.6 L384.6,216.0 L384.3,210.4 L383.9,204.8 L383.3,199.3 L382.5,193.8 L381.6,188.3 L380.4,182.8 L379.1,177.4 L377.7,172.1 L376.0,166.8 L374.2,161.5 L372.2,156.4 L370.0,151.3 L367.7,146.2 L365.2,141.3 L362.5,136.5 L359.6,131.7 L356.6,127.1 L353.4,122.6 L350.0,118.2 L346.5,113.9 L342.9,109.8 L339.0,105.8 L335.1,102.0 L331.0,98.3 L326.8,94.7 L322.5,91.3 L318.0,88.1 L313.4,85.0 L308.8,82.2 L304.0,79.4 L299.2,76.9 L294.2,74.5 L289.2,72.4 L284.2,70.4 L279.0,68.6 L273.8,66.9 L268.6,65.5 L263.3,64.2 L258.0,63.2 L252.6,62.3 L247.3,61.6 L241.9,61.1 L236.5,60.8 L231.1,60.7 L225.7,60.8 L220.4,61.1 L215.0,61.5 L209.7,62.1 L204.4,63.0 L199.2,64.0 L194.0,65.2 L188.8,66.5 L183.7,68.1 L178.7,69.8 L173.7,71.7 L168.8,73.8 L164.1,76.1 L159.4,78.5 L154.8,81.2 L150.3,84.0 L146.0,86.9 L141.7,90.1 L137.7,93.3 L133.7,96.8 L129.9,100.4 L126.3,104.1 L122.9,108.0 L119.6,112.0 L116.5,116.1 L113.6,120.4 L110.8,124.8 L108.3,129.2 L106.0,133.8 L100.6,130.1 L102.1,124.6 L103.9,119.3 L106.0,113.9 L108.3,108.7 L111.0,103.5 L113.9,98.5 L117.0,93.5 L120.4,88.7 L124.1,84.0 L128.0,79.5 L132.1,75.1 L136.4,70.9 L140.9,66.9 L145.7,63.0 L150.6,59.4 L155.7,56.0 L160.9,52.8 L166.4,49.8 L171.9,47.0 L177.6,44.5 L183.5,42.2 L189.4,40.1 L195.4,38.3 L201.6,36.7 L207.8,35.4 L214.0,34.3 L220.4,33.5 L226.7,32.9 L233.1,32.6 L239.5,32.6 L246.0,32.8 L252.4,33.3 L258.8,34.0 L265.2,34.9 L271.6,36.2 L277.9,37.6 L284.2,39.3 L290.4,41.3 L296.5,43.4 L302.6,45.8 L308.6,48.5 L314.5,51.3 L320.3,54.4 L325.9,57.7 L331.5,61.2 L336.9,64.9 L342.2,68.8 L347.4,72.9 L352.4,77.2 L357.3,81.6 L362.0,86.2 L366.5,91.0 L370.9,96.0 L375.2,101.0 L379.2,106.3 L383.1,111.7 L386.8,117.2 L390.3,122.8 L393.6,128.6 L396.8,134.5 L399.7,140.5 L402.5,146.6 L405.1,152.8 L407.4,159.1 L409.6,165.4 L411.6,171.9 L413.3,178.4 L414.9,185.0 L416.3,191.7 L417.4,198.4 L418.4,205.1 L419.2,212.0 L419.7,218.8 L420.0,225.7 L420.2,232.6 L420.1,239.6 L419.8,246.6 L419.3,253.6 L418.6,260.6 L417.7,267.6 L416.5,274.7 L415.2,281.7 L413.6,288.7 L411.9,295.8 L409.9,302.8 L407.7,309.8 L405.3,316.8 L402.6,323.7 L399.7,330.7 L396.7,337.6 L393.4,344.4 L389.8,351.3 L386.1,358.0 L382.1,364.8 L377.9,371.4 L373.4,378.1 L368.7,384.6 L363.8,391.1 L358.7,397.5 L353.3,403.8 L347.7,410.0 L341.8,416.1 L335.7,422.2 L435.5,418 L435.5,51.30000000000001 C429.7,46.4 410.3,30.4 398.0,21.8 C385.7,13.3 368.2,3.6 362.3,0.0 L187.0,-5 Z" fill="#0a1a25"/><path d="M0,0 L28.5,0 C20,10 8,20 0,34 Z" fill="#0a1a25"/><path d="M-1,313.5 C1.9,317.5 11.0,330.1 16.7,337.4 C22.4,344.7 27.8,351.3 33.4,357.4 C38.9,363.5 44.4,369.1 50.0,374.1 C55.6,379.1 61.2,383.3 66.8,387.5 C72.4,391.7 77.4,394.5 83.5,399.1 C89.6,403.7 99.8,412.0 103.5,415.0 C107.2,418.0 105.6,416.7 106.0,417.0 L0,416 Z" fill="#0a1a25"/><circle cx="262.6" cy="109.4" r="8.6" fill="#5b666d"/><circle cx="227.70000000000005" cy="122.69999999999999" r="6.3" fill="#5b666d"/><circle cx="206" cy="117.6" r="4.1" fill="#5b666d"/><circle cx="329.70000000000005" cy="218.60000000000002" r="5" fill="#5b666d"/><circle cx="157.39999999999998" cy="253" r="6.5" fill="#5b666d"/><circle cx="22.5" cy="410.79999999999995" r="4.5" fill="#5b666d"/><circle cx="337.5" cy="406.29999999999995" r="4" fill="#5b666d"/><circle cx="123.69999999999999" cy="70.30000000000001" r="1.1" fill="#e4e8ea"/><circle cx="115.39999999999998" cy="77" r="1" fill="#e4e8ea"/><circle cx="108.30000000000001" cy="84.30000000000001" r="1.1" fill="#e4e8ea"/><circle cx="107.60000000000002" cy="94.1" r="1" fill="#e4e8ea"/><circle cx="87.80000000000001" cy="96.69999999999999" r="1.2" fill="#e4e8ea"/><circle cx="71.5" cy="99.19999999999999" r="0.8" fill="#e4e8ea"/><circle cx="83.39999999999998" cy="116.30000000000001" r="1.2" fill="#e4e8ea"/><circle cx="107.60000000000002" cy="112.1" r="0.8" fill="#e4e8ea"/><circle cx="4.899999999999977" cy="111.4" r="0.7" fill="#e4e8ea"/><circle cx="155.39999999999998" cy="141.60000000000002" r="1.6" fill="#e4e8ea"/><circle cx="253.39999999999998" cy="6.300000000000011" r="0.6" fill="#e4e8ea"/><circle cx="281" cy="8.599999999999994" r="0.6" fill="#e4e8ea"/><circle cx="253.39999999999998" cy="27.599999999999994" r="0.7" fill="#e4e8ea"/><circle cx="344.4" cy="4.800000000000011" r="0.6" fill="#e4e8ea"/><circle cx="371.29999999999995" cy="6.300000000000011" r="0.6" fill="#e4e8ea"/><circle cx="396.70000000000005" cy="192.60000000000002" r="0.9" fill="#e4e8ea"/><circle cx="382.4" cy="200" r="0.8" fill="#e4e8ea"/><circle cx="397.4" cy="208.39999999999998" r="0.9" fill="#e4e8ea"/><circle cx="406.79999999999995" cy="218.5" r="0.8" fill="#e4e8ea"/><circle cx="422.5" cy="217.7" r="0.9" fill="#e4e8ea"/><circle cx="360.79999999999995" cy="208.89999999999998" r="1" fill="#e4e8ea"/><circle cx="399.29999999999995" cy="247.7" r="0.7" fill="#e4e8ea"/><circle cx="427.4" cy="251.5" r="0.6" fill="#e4e8ea"/><circle cx="382.4" cy="260" r="1.1" fill="#e4e8ea"/><circle cx="387.70000000000005" cy="275.8" r="0.6" fill="#e4e8ea"/><circle cx="364.5" cy="311.4" r="1.1" fill="#e4e8ea"/><circle cx="351.70000000000005" cy="319" r="1" fill="#e4e8ea"/><circle cx="373" cy="317.8" r="0.8" fill="#e4e8ea"/><circle cx="378.70000000000005" cy="327.5" r="0.8" fill="#e4e8ea"/><circle cx="396.70000000000005" cy="323.4" r="0.8" fill="#e4e8ea"/><circle cx="277.5" cy="336.5" r="0.6" fill="#e4e8ea"/><circle cx="304.5" cy="342.5" r="0.6" fill="#e4e8ea"/><circle cx="327" cy="345.2" r="0.7" fill="#e4e8ea"/><circle cx="287.6" cy="385.29999999999995" r="0.6" fill="#e4e8ea"/><circle cx="325" cy="406.29999999999995" r="0.8" fill="#e4e8ea"/><circle cx="390" cy="413.79999999999995" r="0.6" fill="#e4e8ea"/><circle cx="68.60000000000002" cy="228.2" r="1.1" fill="#e4e8ea"/><circle cx="80.60000000000002" cy="230.89999999999998" r="0.8" fill="#e4e8ea"/><circle cx="48.69999999999999" cy="237.2" r="0.8" fill="#e4e8ea"/><circle cx="30" cy="239" r="0.7" fill="#e4e8ea"/><circle cx="11.199999999999989" cy="245.5" r="0.9" fill="#e4e8ea"/><circle cx="250.5" cy="301" r="1.4" fill="#e4e8ea"/><circle cx="153" cy="332" r="0.8" fill="#e4e8ea"/><circle cx="174.39999999999998" cy="339.6" r="0.7" fill="#e4e8ea"/><circle cx="194.20000000000005" cy="351.6" r="0.6" fill="#e4e8ea"/><circle cx="229.5" cy="361" r="0.6" fill="#e4e8ea"/><circle cx="210" cy="375" r="0.6" fill="#e4e8ea"/><circle cx="249.29999999999995" cy="367.7" r="0.6" fill="#e4e8ea"/><circle cx="206" cy="395" r="0.6" fill="#e4e8ea"/><circle cx="157.5" cy="395.79999999999995" r="0.6" fill="#e4e8ea"/><circle cx="0.5" cy="410.79999999999995" r="0.7" fill="#e4e8ea"/><circle cx="269" cy="248.2" r="1.5" fill="#e4e8ea"/><circle cx="311.20000000000005" cy="280.7" r="1.5" fill="#e4e8ea"/><circle cx="363" cy="270" r="0.8" fill="#e4e8ea"/><circle cx="81" cy="231" r="0.7" fill="#e4e8ea"/><circle cx="218" cy="208" r="136" fill="none" stroke="#f4f4f4" stroke-width="1.8"/><rect x="75" y="257" width="286" height="33" fill="#ec1c24"/><text x="217.25" y="281.2" text-anchor="middle" font-family="Liberation Sans" font-weight="bold" font-size="18.6" fill="#fff" stroke="#fff" stroke-width="1.2" textLength="260" lengthAdjust="spacingAndGlyphs">ESPECIAL DE ANIVERSÁRIO</text><text x="117.5" y="205.2" font-family="Liberation Sans" font-weight="bold" font-size="73.5" fill="#fff" stroke="#fff" stroke-width="6" stroke-linejoin="miter" stroke-miterlimit="3" textLength="202.5" lengthAdjust="spacingAndGlyphs">MIKE</text><text x="115.69999999999999" y="239.7" font-family="Liberation Sans" font-weight="bold" font-size="37" fill="#fff" stroke="#fff" stroke-width="2.6" stroke-linejoin="miter" stroke-miterlimit="3" textLength="205" lengthAdjust="spacingAndGlyphs">UNIVERSE</text></svg>
<svg style="position:absolute;left:765px;top:140px;" width="215" height="420" viewBox="0 0 215 420"><circle cx="41.5" cy="25.19999999999999" r="18.4" fill="#0b1a25"/><circle cx="41.5" cy="25.19999999999999" r="14.5" fill="none" stroke="#c8ccd0" stroke-width="0.9"/><text x="30.9" y="25.49999999999999" font-family="Liberation Sans" font-weight="bold" font-size="8.6" fill="#fff" stroke="#fff" stroke-width="0.7" textLength="21.5" lengthAdjust="spacingAndGlyphs">MIKE</text><text x="30.9" y="28.79999999999999" font-family="Liberation Sans" font-weight="bold" font-size="4" fill="#e8e8e8" stroke="#e8e8e8" stroke-width="0.3" textLength="21.5" lengthAdjust="spacingAndGlyphs">UNIVERSE</text><rect x="26.2" y="30.99999999999999" width="30.6" height="3" fill="#e8202a"/><rect x="29.5" y="32.19999999999999" width="24" height="0.7" fill="#f4a0a0"/><circle cx="83.5" cy="25.19999999999999" r="18.4" fill="#0b1a25"/><circle cx="83.5" cy="25.19999999999999" r="14.5" fill="none" stroke="#c8ccd0" stroke-width="0.9"/><text x="72.9" y="25.49999999999999" font-family="Liberation Sans" font-weight="bold" font-size="8.6" fill="#fff" stroke="#fff" stroke-width="0.7" textLength="21.5" lengthAdjust="spacingAndGlyphs">MIKE</text><text x="72.9" y="28.79999999999999" font-family="Liberation Sans" font-weight="bold" font-size="4" fill="#e8e8e8" stroke="#e8e8e8" stroke-width="0.3" textLength="21.5" lengthAdjust="spacingAndGlyphs">UNIVERSE</text><rect x="68.2" y="30.99999999999999" width="30.6" height="3" fill="#e8202a"/><rect x="71.5" y="32.19999999999999" width="24" height="0.7" fill="#f4a0a0"/><circle cx="128.39999999999998" cy="25.19999999999999" r="18.4" fill="#0b1a25"/><circle cx="128.39999999999998" cy="25.19999999999999" r="14.5" fill="none" stroke="#c8ccd0" stroke-width="0.9"/><text x="117.79999999999998" y="25.49999999999999" font-family="Liberation Sans" font-weight="bold" font-size="8.6" fill="#fff" stroke="#fff" stroke-width="0.7" textLength="21.5" lengthAdjust="spacingAndGlyphs">MIKE</text><text x="117.79999999999998" y="28.79999999999999" font-family="Liberation Sans" font-weight="bold" font-size="4" fill="#e8e8e8" stroke="#e8e8e8" stroke-width="0.3" textLength="21.5" lengthAdjust="spacingAndGlyphs">UNIVERSE</text><rect x="113.09999999999998" y="30.99999999999999" width="30.6" height="3" fill="#e8202a"/><rect x="116.39999999999998" y="32.19999999999999" width="24" height="0.7" fill="#f4a0a0"/><circle cx="170.5" cy="25.19999999999999" r="18.4" fill="#0b1a25"/><circle cx="170.5" cy="25.19999999999999" r="14.5" fill="none" stroke="#c8ccd0" stroke-width="0.9"/><text x="159.9" y="25.49999999999999" font-family="Liberation Sans" font-weight="bold" font-size="8.6" fill="#fff" stroke="#fff" stroke-width="0.7" textLength="21.5" lengthAdjust="spacingAndGlyphs">MIKE</text><text x="159.9" y="28.79999999999999" font-family="Liberation Sans" font-weight="bold" font-size="4" fill="#e8e8e8" stroke="#e8e8e8" stroke-width="0.3" textLength="21.5" lengthAdjust="spacingAndGlyphs">UNIVERSE</text><rect x="155.2" y="30.99999999999999" width="30.6" height="3" fill="#e8202a"/><rect x="158.5" y="32.19999999999999" width="24" height="0.7" fill="#f4a0a0"/><polygon points="35,55.69999999999999 178.60000000000002,55.69999999999999 207.29999999999995,83.5 207.29999999999995,227 191.29999999999995,239 191.29999999999995,408 24,408 24,239 6.399999999999977,227 6.399999999999977,83.5" fill="#fbfbfb" stroke="#dedede" stroke-width="1"/><rect x="31.25" y="81" width="152" height="152" rx="3.5" fill="#0b1a25"/><rect x="31.25" y="248.7" width="152" height="151.5" rx="3.5" fill="#0b1a25"/><rect x="52.299999999999955" y="143.3" width="110.2" height="27.4" rx="3" fill="none" stroke="#f4f4f4" stroke-width="3.2"/><text x="66.20000000000005" y="161.89999999999998" font-family="Liberation Serif" font-weight="bold" font-size="14.5" fill="#f4f4f4" stroke="#f4f4f4" stroke-width="0.6" textLength="83" lengthAdjust="spacingAndGlyphs">DESAFIOS</text><g transform="rotate(180 107.5 324.3)"><circle cx="107.5" cy="324.3" r="30" fill="none" stroke="#e8e8e8" stroke-width="1"/><text x="84.7" y="326.6" font-family="Liberation Sans" font-weight="bold" font-size="16.5" fill="#fff" stroke="#fff" stroke-width="1.2" textLength="45.5" lengthAdjust="spacingAndGlyphs">MIKE</text><text x="84.7" y="333.7" font-family="Liberation Sans" font-weight="bold" font-size="8.2" fill="#fff" stroke="#fff" stroke-width="0.4" textLength="45.5" lengthAdjust="spacingAndGlyphs">UNIVERSE</text><rect x="76.0" y="335.5" width="62.8" height="6.4" fill="#f04050"/><rect x="76.0" y="336.90000000000003" width="62.8" height="3.4" fill="#e8202a"/><circle cx="98.5" cy="302.3" r="1.6" fill="#5b666d"/><circle cx="111.5" cy="307.3" r="1.2" fill="#5b666d"/></g></svg>
<div style="position:absolute;left:51px;top:116px;width:1198px;height:1px;background:repeating-linear-gradient(90deg,#0000ff 0 3px,transparent 3px 6px);"></div>
<div style="position:absolute;left:51px;top:562px;width:1198px;height:1px;background:repeating-linear-gradient(90deg,#0000ff 0 3px,transparent 3px 6px);"></div>
<div style="position:absolute;left:329px;top:116px;width:1px;height:453px;background:repeating-linear-gradient(180deg,#0000ff 0 3px,transparent 3px 6px);"></div>
<div style="position:absolute;left:651px;top:116px;width:1px;height:453px;background:repeating-linear-gradient(180deg,#0000ff 0 3px,transparent 3px 6px);"></div>
<div style="position:absolute;left:974px;top:116px;width:1px;height:453px;background:repeating-linear-gradient(180deg,#0000ff 0 3px,transparent 3px 6px);"></div>
<div style="position:absolute;left:1251px;top:114px;width:18px;height:455px;background:#eeeeee;"></div>
<div style="position:absolute;left:1251px;top:252px;width:15px;height:182px;background:#cdcdcd;"></div>
<div style="position:absolute;left:51px;top:569px;width:1218px;height:17px;background:#f0f0f0;"></div>
<div style="position:absolute;left:51px;top:569px;width:610px;height:17px;background:#ececec;border-top:1px solid #b8b8b8;border-right:1px solid #b8b8b8;"></div>
<svg style="position:absolute;left:50px;top:569px;" width="1219" height="17" viewBox="0 0 1219 17"><path d="M4.3 2.5 H10 L13.5 6 V13.5 H4.3 Z" fill="#fff" stroke="#111" stroke-width="1.1"/><path d="M10 2.5 V6 H13.5" fill="none" stroke="#111" stroke-width="1"/><path d="M9 6.5 V12.5 M6 9.5 H12" stroke="#111" stroke-width="1.2"/><rect x="21" y="3" width="1.5" height="9" fill="#111"/><path d="M29 3 V12 L23 7.5 Z" fill="#111"/><path d="M46 3 V12 L40 7.5 Z" fill="#111"/><path d="M129 3 V12 L135 7.5 Z" fill="#111"/><path d="M145 3 V12 L151 7.5 Z" fill="#111"/><rect x="151" y="3" width="1.5" height="9" fill="#111"/><path d="M162.3 2.5 H168 L171.5 6 V13.5 H162.3 Z" fill="#fff" stroke="#111" stroke-width="1.1"/><path d="M168 2.5 V6 H171.5" fill="none" stroke="#111" stroke-width="1"/><path d="M167 6.5 V12.5 M164 9.5 H170" stroke="#111" stroke-width="1.2"/><rect x="175" y="1" width="1" height="15" fill="#b8b8b8"/><path d="M248 0.5 L255 16 H325 L318 0.5 Z" fill="#cce2f6" stroke="#a8b8c8" stroke-width="1"/><path d="M248 0.5 L254 7 V16" fill="none" stroke="#a8a8a8" stroke-width="1"/><path d="M390 0.5 L396 7 V16" fill="none" stroke="#a8a8a8" stroke-width="1"/><path d="M461 0.5 L467 7 V16" fill="none" stroke="#a8a8a8" stroke-width="1"/><path d="M532 0.5 L538 7 V16" fill="none" stroke="#a8a8a8" stroke-width="1"/><path d="M318 0.5 L324.5 7 V16" fill="none" stroke="#a8a8a8" stroke-width="1"/><path d="M604 5 L606 3 V5 Z M604 9 L606 7 V9 Z M604 13 L606 11 V13 Z" fill="#b0b0b0"/><path d="M620.5 4.5 L616.5 8.5 L620.5 12.5" fill="none" stroke="#444" stroke-width="2"/><path d="M1188.5 4.5 L1192.5 8.5 L1188.5 12.5" fill="none" stroke="#444" stroke-width="2"/></svg>
<div style="position:absolute;left:747px;top:570px;width:417px;height:15px;background:#cdcdcd;"></div>
<div style="position:absolute;left:120px;top:571px;font-size:13px;line-height:15px;color:#111;white-space:nowrap;line-height:15px;">2 de 7</div>
<div style="position:absolute;left:240px;top:571px;font-size:12px;line-height:14px;color:#111;white-space:nowrap;line-height:15px;">Página 1</div>
<div style="position:absolute;left:311px;top:571px;font-size:12px;line-height:14px;color:#111;white-space:nowrap;line-height:15px;">Página 2</div>
<div style="position:absolute;left:382px;top:571px;font-size:12px;line-height:14px;color:#111;white-space:nowrap;line-height:15px;">Página 3</div>
<div style="position:absolute;left:453px;top:571px;font-size:12px;line-height:14px;color:#111;white-space:nowrap;line-height:15px;">Página 4</div>
<div style="position:absolute;left:524px;top:571px;font-size:12px;line-height:14px;color:#111;white-space:nowrap;line-height:15px;">Página 5</div>
<div style="position:absolute;left:595px;top:571px;font-size:12px;line-height:14px;color:#111;white-space:nowrap;line-height:15px;">Página 6</div>
<div style="position:absolute;left:1250px;top:569px;width:17px;height:17px;background:#e6e6e6;"></div>
<svg style="position:absolute;left:1250px;top:569px;" width="17" height="17" viewBox="0 0 17 17"><circle cx="7.5" cy="7.5" r="4.8" fill="none" stroke="#3c3c50" stroke-width="1.2"/><circle cx="7.5" cy="7.5" r="1.6" fill="none" stroke="#3c3c50" stroke-width="1"/><path d="M7.5 3 V5 M7.5 10 V12 M3 7.5 H5 M10 7.5 H12" stroke="#3c3c50" stroke-width="1"/><path d="M11 11 L15 15" stroke="#3c3c50" stroke-width="2"/></svg>
<svg style="position:absolute;left:1251px;top:114px;" width="17" height="455" viewBox="0 0 17 455"><path d="M4 12 L8.5 7.5 L13 12" fill="none" stroke="#333" stroke-width="1.8"/><path d="M4 444 L8.5 448.5 L13 444" fill="none" stroke="#333" stroke-width="1.8"/></svg>
<div style="position:absolute;left:30px;top:586px;width:1240px;height:73px;background:#ffffff;"></div>
<div style="position:absolute;left:1269px;top:93px;width:26px;height:566px;background:#f0f0f0;border-left:1px solid #c8c8c8;"></div>
<svg style="position:absolute;left:1269px;top:93px;" width="26" height="566" viewBox="0 0 26 566"><defs><linearGradient id="cg" x1="0" y1="0" x2="0" y2="1"><stop offset="0" stop-color="#e8e8ec"/><stop offset="0.5" stop-color="#d4d4d8"/><stop offset="1" stop-color="#a8a8b0"/></linearGradient></defs><path d="M12.5 6 L8.5 10 L12.5 14 M16.5 6 L12.5 10 L16.5 14" fill="none" stroke="#505050" stroke-width="1.5"/><path d="M2.5 27 L5.5 24 H20.5 L23.5 27 V121 L20 125 H6 L2.5 121 Z" fill="#eeeeee" stroke="#b4b4b4" stroke-width="1"/><path d="M2.5 382 L5.5 379 H20.5 L23.5 382 V447 L20 451 H6 L2.5 447 Z" fill="#eeeeee" stroke="#b4b4b4" stroke-width="1"/><path d="M2.5 258 L5.5 255 H20.5 L23.5 258 V373 L20 377 H6 L2.5 373 Z" fill="#eeeeee" stroke="#b4b4b4" stroke-width="1"/><path d="M0.5 125 H20.5 L23.5 128 V250 L20.5 253 H0.5" fill="#f6f6f6" stroke="#b8b8b8" stroke-width="1"/><path d="M6 37 C6 33 12 32 13 35 L10 40 L6 43 Z" fill="#b01010"/><circle cx="15" cy="38" r="3.5" fill="#111"/><path d="M17 41 L20 44" stroke="#111" stroke-width="1"/><g transform="translate(2.5,1)"><path d="M13 129 L15.2 134 L20.5 134.5 L16.5 138 L17.8 143 L13 140.3 L8.2 143 L9.5 138 L5.5 134.5 L10.8 134 Z" fill="#f0f0f8" stroke="#505070" stroke-width="1.1"/></g><path d="M9.5 239 L16.5 246 M16.5 239 L9.5 246" stroke="#777" stroke-width="1.8"/><rect x="11.5" y="259.5" width="4" height="13" fill="#fff" stroke="#505068"/><rect x="15.5" y="265.5" width="5" height="7" fill="#fff" stroke="#505068"/><path d="M6.5 258 V275" stroke="#505068" stroke-dasharray="1 1"/><rect x="5.5" y="383.5" width="15" height="15" rx="2" fill="url(#cg)" stroke="#a0a0a8"/><rect x="9.5" y="387.5" width="7" height="7" fill="none" stroke="#606068"/><circle cx="13" cy="391" r="1.5" fill="none" stroke="#606068"/></svg>
<div style="position:absolute;left:1287px;top:143px;font-size:11px;line-height:13px;color:#555;white-space:nowrap;transform-origin:0 0;transform:rotate(90deg);">ConceptShare</div>
<div style="position:absolute;left:1287px;top:242px;font-size:11px;line-height:13px;color:#111;white-space:nowrap;transform-origin:0 0;transform:rotate(90deg);">Inserir caractere</div>
<div style="position:absolute;left:1287px;top:372px;font-size:11px;line-height:13px;color:#555;white-space:nowrap;transform-origin:0 0;transform:rotate(90deg);">Alinhar e distribuir...</div>
<div style="position:absolute;left:1287px;top:496px;font-size:11px;line-height:13px;color:#555;white-space:nowrap;transform-origin:0 0;transform:rotate(90deg);">Contorno</div>
<div style="position:absolute;left:1295px;top:93px;width:71px;height:566px;background:#ffffff;border-left:2px solid #c8c8c8;"></div>
<svg style="position:absolute;left:39px;top:589px;" width="1226" height="70" viewBox="0 0 1226 70"><defs><linearGradient id="gbtn" x1="0" y1="0" x2="1" y2="1"><stop offset="0" stop-color="#ffffff"/><stop offset="1" stop-color="#b8b8b8"/></linearGradient></defs><g transform="translate(0,0)"><rect x="0" y="0" width="17" height="17" fill="#fff"/><path d="M0.5 17 V0.5 H16" fill="none" stroke="#a0a0a0" stroke-width="1"/><rect x="2.5" y="2.5" width="12.5" height="12.5" fill="url(#gbtn)" stroke="#111" stroke-width="1.3"/><path d="M7 6.5 L10.5 8.8 L7 11 Z" fill="#111"/></g><g transform="translate(17,0)"><rect width="17" height="17" fill="#f2f2f2"/><path d="M4 14 L11 7" stroke="#5a8a8a" stroke-width="2"/><path d="M9 5 L12 2 L15 5 L12 8 Z" fill="#2a2a4a"/><path d="M8 6 L11 9" stroke="#2a2a4a" stroke-width="2"/></g><g transform="translate(34,0)"><rect x="0.5" y="0.5" width="16" height="16" fill="#fff" stroke="#333" stroke-width="1"/><path d="M1 1 L16 16 M16 1 L1 16" stroke="#222" stroke-width="1"/></g><rect x="51.5" y="0.5" width="17" height="17" fill="#ffffff" stroke="#5c5c5c" stroke-width="1"/><rect x="68.5" y="0.5" width="17" height="17" fill="#e4e6e8" stroke="#5c5c5c" stroke-width="1"/><rect x="85.5" y="0.5" width="17" height="17" fill="#222222" stroke="#5c5c5c" stroke-width="1"/><rect x="102.5" y="0.5" width="17" height="17" fill="#555759" stroke="#5c5c5c" stroke-width="1"/><rect x="119.5" y="0.5" width="17" height="17" fill="#6d6e71" stroke="#5c5c5c" stroke-width="1"/><rect x="136.5" y="0.5" width="17" height="17" fill="#f58345" stroke="#5c5c5c" stroke-width="1"/><rect x="153.5" y="0.5" width="17" height="17" fill="#a3c3d7" stroke="#5c5c5c" stroke-width="1"/><rect x="170.5" y="0.5" width="17" height="17" fill="#a4cd39" stroke="#5c5c5c" stroke-width="1"/><rect x="187.5" y="0.5" width="17" height="17" fill="#a8bc8e" stroke="#5c5c5c" stroke-width="1"/><rect x="204.5" y="0.5" width="17" height="17" fill="#ffc20e" stroke="#5c5c5c" stroke-width="1"/><rect x="221.5" y="0.5" width="17" height="17" fill="#8053a0" stroke="#5c5c5c" stroke-width="1"/><rect x="238.5" y="0.5" width="17" height="17" fill="#6c4c7c" stroke="#5c5c5c" stroke-width="1"/><rect x="255.5" y="0.5" width="17" height="17" fill="#6b4287" stroke="#5c5c5c" stroke-width="1"/><rect x="272.5" y="0.5" width="17" height="17" fill="#ed1c24" stroke="#5c5c5c" stroke-width="1"/><rect x="289.5" y="0.5" width="17" height="17" fill="#ed9a32" stroke="#5c5c5c" stroke-width="1"/><rect x="306.5" y="0.5" width="17" height="17" fill="#ec9520" stroke="#5c5c5c" stroke-width="1"/><rect x="323.5" y="0.5" width="17" height="17" fill="#e04a3c" stroke="#5c5c5c" stroke-width="1"/><rect x="340.5" y="0.5" width="17" height="17" fill="#e03c28" stroke="#5c5c5c" stroke-width="1"/><rect x="357.5" y="0.5" width="17" height="17" fill="#80c060" stroke="#5c5c5c" stroke-width="1"/><rect x="374.5" y="0.5" width="17" height="17" fill="#68c4d4" stroke="#5c5c5c" stroke-width="1"/><rect x="391.5" y="0.5" width="17" height="17" fill="#ecd89c" stroke="#5c5c5c" stroke-width="1"/><rect x="408.5" y="0.5" width="17" height="17" fill="#f0d070" stroke="#5c5c5c" stroke-width="1"/><rect x="425.5" y="0.5" width="17" height="17" fill="#f89870" stroke="#5c5c5c" stroke-width="1"/><rect x="442.5" y="0.5" width="17" height="17" fill="#4088b0" stroke="#5c5c5c" stroke-width="1"/><rect x="459.5" y="0.5" width="17" height="17" fill="#28a4b0" stroke="#5c5c5c" stroke-width="1"/><rect x="476.5" y="0.5" width="17" height="17" fill="#d04050" stroke="#5c5c5c" stroke-width="1"/><rect x="493.5" y="0.5" width="17" height="17" fill="#f05058" stroke="#5c5c5c" stroke-width="1"/><rect x="510.5" y="0.5" width="17" height="17" fill="#e84858" stroke="#5c5c5c" stroke-width="1"/><rect x="527.5" y="0.5" width="17" height="17" fill="#e84848" stroke="#5c5c5c" stroke-width="1"/><rect x="544.5" y="0.5" width="17" height="17" fill="#d4d4d8" stroke="#5c5c5c" stroke-width="1"/><rect x="561.5" y="0.5" width="17" height="17" fill="#a4a8ac" stroke="#5c5c5c" stroke-width="1"/><rect x="578.5" y="0.5" width="17" height="17" fill="#c0c0c4" stroke="#5c5c5c" stroke-width="1"/><rect x="595.5" y="0.5" width="17" height="17" fill="#d8d8d8" stroke="#5c5c5c" stroke-width="1"/><rect x="612.5" y="0.5" width="17" height="17" fill="#0c1c28" stroke="#5c5c5c" stroke-width="1"/><rect x="629.5" y="0.5" width="17" height="17" fill="#000000" stroke="#5c5c5c" stroke-width="1"/><rect x="646.5" y="0.5" width="17" height="17" fill="#d43850" stroke="#5c5c5c" stroke-width="1"/><rect x="663.5" y="0.5" width="17" height="17" fill="#c42030" stroke="#5c5c5c" stroke-width="1"/><rect x="680.5" y="0.5" width="17" height="17" fill="#c03038" stroke="#5c5c5c" stroke-width="1"/><rect x="697.5" y="0.5" width="17" height="17" fill="#c02030" stroke="#5c5c5c" stroke-width="1"/><rect x="714.5" y="0.5" width="17" height="17" fill="#fcd4c0" stroke="#5c5c5c" stroke-width="1"/><rect x="731.5" y="0.5" width="17" height="17" fill="#9c8078" stroke="#5c5c5c" stroke-width="1"/><rect x="748.5" y="0.5" width="17" height="17" fill="#988078" stroke="#5c5c5c" stroke-width="1"/><rect x="765.5" y="0.5" width="17" height="17" fill="#8c8c8c" stroke="#5c5c5c" stroke-width="1"/><rect x="782.5" y="0.5" width="17" height="17" fill="#f08460" stroke="#5c5c5c" stroke-width="1"/><rect x="799.5" y="0.5" width="17" height="17" fill="#ffa888" stroke="#5c5c5c" stroke-width="1"/><rect x="816.5" y="0.5" width="17" height="17" fill="#f08458" stroke="#5c5c5c" stroke-width="1"/><rect x="833.5" y="0.5" width="17" height="17" fill="#f08050" stroke="#5c5c5c" stroke-width="1"/><rect x="850.5" y="0.5" width="17" height="17" fill="#f89070" stroke="#5c5c5c" stroke-width="1"/><rect x="867.5" y="0.5" width="17" height="17" fill="#f08c68" stroke="#5c5c5c" stroke-width="1"/><rect x="884.5" y="0.5" width="17" height="17" fill="#e87040" stroke="#5c5c5c" stroke-width="1"/><rect x="901.5" y="0.5" width="17" height="17" fill="#d85828" stroke="#5c5c5c" stroke-width="1"/><rect x="918.5" y="0.5" width="17" height="17" fill="#c04828" stroke="#5c5c5c" stroke-width="1"/><rect x="935.5" y="0.5" width="17" height="17" fill="#ec9070" stroke="#5c5c5c" stroke-width="1"/><rect x="952.5" y="0.5" width="17" height="17" fill="#f8a080" stroke="#5c5c5c" stroke-width="1"/><rect x="969.5" y="0.5" width="17" height="17" fill="#e87040" stroke="#5c5c5c" stroke-width="1"/><rect x="986.5" y="0.5" width="17" height="17" fill="#d85c28" stroke="#5c5c5c" stroke-width="1"/><rect x="1003.5" y="0.5" width="17" height="17" fill="#e87040" stroke="#5c5c5c" stroke-width="1"/><rect x="1020.5" y="0.5" width="17" height="17" fill="#f08860" stroke="#5c5c5c" stroke-width="1"/><rect x="1037.5" y="0.5" width="17" height="17" fill="#ec8460" stroke="#5c5c5c" stroke-width="1"/><rect x="1054.5" y="0.5" width="17" height="17" fill="#d85828" stroke="#5c5c5c" stroke-width="1"/><rect x="1071.5" y="0.5" width="17" height="17" fill="#c07828" stroke="#5c5c5c" stroke-width="1"/><rect x="1088.5" y="0.5" width="17" height="17" fill="#e89028" stroke="#5c5c5c" stroke-width="1"/><rect x="1105.5" y="0.5" width="17" height="17" fill="#d88828" stroke="#5c5c5c" stroke-width="1"/><rect x="1122.5" y="0.5" width="17" height="17" fill="#f0a850" stroke="#5c5c5c" stroke-width="1"/><rect x="1139.5" y="0.5" width="17" height="17" fill="#cc7c28" stroke="#5c5c5c" stroke-width="1"/><rect x="1156.5" y="0.5" width="17" height="17" fill="#e09440" stroke="#5c5c5c" stroke-width="1"/><rect x="1173.5" y="0.5" width="17" height="17" fill="#f4b060" stroke="#5c5c5c" stroke-width="1"/><rect x="1190.5" y="0.5" width="17" height="17" fill="#f0a448" stroke="#5c5c5c" stroke-width="1"/><rect x="1207.5" y="0.5" width="17" height="17" fill="#e88828" stroke="#5c5c5c" stroke-width="1"/><rect x="0.5" y="17.5" width="17" height="17" fill="#d07a28" stroke="#5c5c5c" stroke-width="1"/><rect x="17.5" y="17.5" width="17" height="17" fill="#de8430" stroke="#5c5c5c" stroke-width="1"/><rect x="34.5" y="17.5" width="17" height="17" fill="#e38430" stroke="#5c5c5c" stroke-width="1"/><rect x="51.5" y="17.5" width="17" height="17" fill="#e58e40" stroke="#5c5c5c" stroke-width="1"/><rect x="68.5" y="17.5" width="17" height="17" fill="#e78c28" stroke="#5c5c5c" stroke-width="1"/><rect x="85.5" y="17.5" width="17" height="17" fill="#ce7e28" stroke="#5c5c5c" stroke-width="1"/><rect x="102.5" y="17.5" width="17" height="17" fill="#e89a48" stroke="#5c5c5c" stroke-width="1"/><rect x="119.5" y="17.5" width="17" height="17" fill="#df9038" stroke="#5c5c5c" stroke-width="1"/><rect x="136.5" y="17.5" width="17" height="17" fill="#e09848" stroke="#5c5c5c" stroke-width="1"/><rect x="153.5" y="17.5" width="17" height="17" fill="#de9040" stroke="#5c5c5c" stroke-width="1"/><rect x="170.5" y="17.5" width="17" height="17" fill="#f0a858" stroke="#5c5c5c" stroke-width="1"/><rect x="187.5" y="17.5" width="17" height="17" fill="#e09a50" stroke="#5c5c5c" stroke-width="1"/><rect x="204.5" y="17.5" width="17" height="17" fill="#c4b080" stroke="#5c5c5c" stroke-width="1"/><rect x="221.5" y="17.5" width="17" height="17" fill="#f0dca0" stroke="#5c5c5c" stroke-width="1"/><rect x="238.5" y="17.5" width="17" height="17" fill="#e8d498" stroke="#5c5c5c" stroke-width="1"/><rect x="255.5" y="17.5" width="17" height="17" fill="#d8c080" stroke="#5c5c5c" stroke-width="1"/><rect x="272.5" y="17.5" width="17" height="17" fill="#e8dca8" stroke="#5c5c5c" stroke-width="1"/><rect x="289.5" y="17.5" width="17" height="17" fill="#e8d490" stroke="#5c5c5c" stroke-width="1"/><rect x="306.5" y="17.5" width="17" height="17" fill="#d8c480" stroke="#5c5c5c" stroke-width="1"/><rect x="323.5" y="17.5" width="17" height="17" fill="#d0c090" stroke="#5c5c5c" stroke-width="1"/><rect x="340.5" y="17.5" width="17" height="17" fill="#c03848" stroke="#5c5c5c" stroke-width="1"/><rect x="357.5" y="17.5" width="17" height="17" fill="#d8cc9c" stroke="#5c5c5c" stroke-width="1"/><rect x="374.5" y="17.5" width="17" height="17" fill="#e8dca8" stroke="#5c5c5c" stroke-width="1"/><rect x="391.5" y="17.5" width="17" height="17" fill="#ece0b8" stroke="#5c5c5c" stroke-width="1"/><rect x="408.5" y="17.5" width="17" height="17" fill="#5a9048" stroke="#5c5c5c" stroke-width="1"/><rect x="425.5" y="17.5" width="17" height="17" fill="#68a050" stroke="#5c5c5c" stroke-width="1"/><rect x="442.5" y="17.5" width="17" height="17" fill="#68a848" stroke="#5c5c5c" stroke-width="1"/><rect x="459.5" y="17.5" width="17" height="17" fill="#70b050" stroke="#5c5c5c" stroke-width="1"/><rect x="476.5" y="17.5" width="17" height="17" fill="#588840" stroke="#5c5c5c" stroke-width="1"/><rect x="493.5" y="17.5" width="17" height="17" fill="#4a7838" stroke="#5c5c5c" stroke-width="1"/><rect x="510.5" y="17.5" width="17" height="17" fill="#387090" stroke="#5c5c5c" stroke-width="1"/><rect x="527.5" y="17.5" width="17" height="17" fill="#305870" stroke="#5c5c5c" stroke-width="1"/><rect x="544.5" y="17.5" width="17" height="17" fill="#0c5068" stroke="#5c5c5c" stroke-width="1"/><rect x="561.5" y="17.5" width="17" height="17" fill="#105878" stroke="#5c5c5c" stroke-width="1"/><rect x="578.5" y="17.5" width="17" height="17" fill="#1a5c78" stroke="#5c5c5c" stroke-width="1"/><rect x="595.5" y="17.5" width="17" height="17" fill="#2a6680" stroke="#5c5c5c" stroke-width="1"/><rect x="612.5" y="17.5" width="17" height="17" fill="#247898" stroke="#5c5c5c" stroke-width="1"/><rect x="629.5" y="17.5" width="17" height="17" fill="#60a4c4" stroke="#5c5c5c" stroke-width="1"/><rect x="646.5" y="17.5" width="17" height="17" fill="#909498" stroke="#5c5c5c" stroke-width="1"/><rect x="663.5" y="17.5" width="17" height="17" fill="#d4d4d8" stroke="#5c5c5c" stroke-width="1"/><rect x="680.5" y="17.5" width="17" height="17" fill="#c0c4c4" stroke="#5c5c5c" stroke-width="1"/><rect x="697.5" y="17.5" width="17" height="17" fill="#1c2834" stroke="#5c5c5c" stroke-width="1"/><rect x="714.5" y="17.5" width="17" height="17" fill="#3c4450" stroke="#5c5c5c" stroke-width="1"/><rect x="731.5" y="17.5" width="17" height="17" fill="#fcd098" stroke="#5c5c5c" stroke-width="1"/><rect x="748.5" y="17.5" width="17" height="17" fill="#fff8d8" stroke="#5c5c5c" stroke-width="1"/><rect x="765.5" y="17.5" width="17" height="17" fill="#fff4b0" stroke="#5c5c5c" stroke-width="1"/><rect x="782.5" y="17.5" width="17" height="17" fill="#f4b888" stroke="#5c5c5c" stroke-width="1"/><rect x="799.5" y="17.5" width="17" height="17" fill="#fcd8a0" stroke="#5c5c5c" stroke-width="1"/><rect x="816.5" y="17.5" width="17" height="17" fill="#d80018" stroke="#5c5c5c" stroke-width="1"/><rect x="833.5" y="17.5" width="17" height="17" fill="#303090" stroke="#5c5c5c" stroke-width="1"/><rect x="850.5" y="17.5" width="17" height="17" fill="#ec8058" stroke="#5c5c5c" stroke-width="1"/><rect x="867.5" y="17.5" width="17" height="17" fill="#f08450" stroke="#5c5c5c" stroke-width="1"/><rect x="884.5" y="17.5" width="17" height="17" fill="#f8a078" stroke="#5c5c5c" stroke-width="1"/><rect x="901.5" y="17.5" width="17" height="17" fill="#f89060" stroke="#5c5c5c" stroke-width="1"/><rect x="918.5" y="17.5" width="17" height="17" fill="#48a090" stroke="#5c5c5c" stroke-width="1"/><rect x="935.5" y="17.5" width="17" height="17" fill="#f4b468" stroke="#5c5c5c" stroke-width="1"/><rect x="952.5" y="17.5" width="17" height="17" fill="#688c48" stroke="#5c5c5c" stroke-width="1"/><rect x="969.5" y="17.5" width="17" height="17" fill="#2c7090" stroke="#5c5c5c" stroke-width="1"/><rect x="986.5" y="17.5" width="17" height="17" fill="#2c7090" stroke="#5c5c5c" stroke-width="1"/><rect x="1003.5" y="17.5" width="17" height="17" fill="#dcd0a8" stroke="#5c5c5c" stroke-width="1"/><rect x="1020.5" y="17.5" width="17" height="17" fill="#dcd4c0" stroke="#5c5c5c" stroke-width="1"/><rect x="1037.5" y="17.5" width="17" height="17" fill="#e0d8b0" stroke="#5c5c5c" stroke-width="1"/><rect x="1054.5" y="17.5" width="17" height="17" fill="#e8e0c0" stroke="#5c5c5c" stroke-width="1"/><rect x="1071.5" y="17.5" width="17" height="17" fill="#545450" stroke="#5c5c5c" stroke-width="1"/><rect x="1088.5" y="17.5" width="17" height="17" fill="#808084" stroke="#5c5c5c" stroke-width="1"/><rect x="1105.5" y="17.5" width="17" height="17" fill="#404044" stroke="#5c5c5c" stroke-width="1"/><rect x="1122.5" y="17.5" width="17" height="17" fill="#142430" stroke="#5c5c5c" stroke-width="1"/><rect x="1139.5" y="17.5" width="17" height="17" fill="#1c2c44" stroke="#5c5c5c" stroke-width="1"/><rect x="1156.5" y="17.5" width="17" height="17" fill="#10202c" stroke="#5c5c5c" stroke-width="1"/><rect x="1173.5" y="17.5" width="17" height="17" fill="#1c2c38" stroke="#5c5c5c" stroke-width="1"/><rect x="1190.5" y="17.5" width="17" height="17" fill="#a81c24" stroke="#5c5c5c" stroke-width="1"/><rect x="1207.5" y="17.5" width="17" height="17" fill="#e06c64" stroke="#5c5c5c" stroke-width="1"/><rect x="0.5" y="34.5" width="17" height="17" fill="#c05828" stroke="#5c5c5c" stroke-width="1"/><rect x="17.5" y="34.5" width="17" height="17" fill="#88a0a0" stroke="#5c5c5c" stroke-width="1"/><rect x="34.5" y="34.5" width="17" height="17" fill="#050505" stroke="#5c5c5c" stroke-width="1"/><rect x="51.5" y="34.5" width="17" height="17" fill="#526462" stroke="#5c5c5c" stroke-width="1"/><rect x="68.5" y="34.5" width="17" height="17" fill="#2f4040" stroke="#5c5c5c" stroke-width="1"/><rect x="85.5" y="34.5" width="17" height="17" fill="#a0b8b8" stroke="#5c5c5c" stroke-width="1"/><rect x="102.5" y="34.5" width="17" height="17" fill="#4a9040" stroke="#5c5c5c" stroke-width="1"/><rect x="119.5" y="34.5" width="17" height="17" fill="#2a7ea0" stroke="#5c5c5c" stroke-width="1"/><rect x="136.5" y="34.5" width="17" height="17" fill="#889ca8" stroke="#5c5c5c" stroke-width="1"/><rect x="153.5" y="34.5" width="17" height="17" fill="#00b0f0" stroke="#5c5c5c" stroke-width="1"/><rect x="170.5" y="34.5" width="17" height="17" fill="#fff000" stroke="#5c5c5c" stroke-width="1"/><rect x="187.5" y="34.5" width="17" height="17" fill="#ec008c" stroke="#5c5c5c" stroke-width="1"/><rect x="204.5" y="34.5" width="17" height="17" fill="#99d8f4" stroke="#5c5c5c" stroke-width="1"/><rect x="221.5" y="34.5" width="17" height="17" fill="#a03018" stroke="#5c5c5c" stroke-width="1"/><rect x="238.5" y="34.5" width="17" height="17" fill="#e86458" stroke="#5c5c5c" stroke-width="1"/><rect x="255.5" y="34.5" width="17" height="17" fill="#a01c20" stroke="#5c5c5c" stroke-width="1"/><rect x="272.5" y="34.5" width="17" height="17" fill="#ffffff" stroke="#5c5c5c" stroke-width="1"/><rect x="289.5" y="34.5" width="17" height="17" fill="#b02830" stroke="#5c5c5c" stroke-width="1"/><rect x="306.5" y="34.5" width="17" height="17" fill="#c84c50" stroke="#5c5c5c" stroke-width="1"/><rect x="323.5" y="34.5" width="17" height="17" fill="#087ca8" stroke="#5c5c5c" stroke-width="1"/><rect x="340.5" y="34.5" width="17" height="17" fill="#00dcff" stroke="#5c5c5c" stroke-width="1"/><rect x="357.5" y="34.5" width="17" height="17" fill="#00b4dc" stroke="#5c5c5c" stroke-width="1"/><rect x="374.5" y="34.5" width="17" height="17" fill="#00dcff" stroke="#5c5c5c" stroke-width="1"/><rect x="391.5" y="34.5" width="17" height="17" fill="#f0f000" stroke="#5c5c5c" stroke-width="1"/><rect x="408.5" y="34.5" width="17" height="17" fill="#d8d800" stroke="#5c5c5c" stroke-width="1"/><rect x="425.5" y="34.5" width="17" height="17" fill="#f8d800" stroke="#5c5c5c" stroke-width="1"/><rect x="442.5" y="34.5" width="17" height="17" fill="#f0ec00" stroke="#5c5c5c" stroke-width="1"/><rect x="459.5" y="34.5" width="17" height="17" fill="#ffff30" stroke="#5c5c5c" stroke-width="1"/><rect x="476.5" y="34.5" width="17" height="17" fill="#f8d800" stroke="#5c5c5c" stroke-width="1"/><rect x="493.5" y="34.5" width="17" height="17" fill="#a818a8" stroke="#5c5c5c" stroke-width="1"/><rect x="510.5" y="34.5" width="17" height="17" fill="#9a3090" stroke="#5c5c5c" stroke-width="1"/><rect x="527.5" y="34.5" width="17" height="17" fill="#d06020" stroke="#5c5c5c" stroke-width="1"/><rect x="544.5" y="34.5" width="17" height="17" fill="#d06028" stroke="#5c5c5c" stroke-width="1"/><rect x="561.5" y="34.5" width="17" height="17" fill="#00c000" stroke="#5c5c5c" stroke-width="1"/><rect x="578.5" y="34.5" width="17" height="17" fill="#50b448" stroke="#5c5c5c" stroke-width="1"/><rect x="595.5" y="34.5" width="17" height="17" fill="#70bc48" stroke="#5c5c5c" stroke-width="1"/><rect x="612.5" y="34.5" width="17" height="17" fill="#80c040" stroke="#5c5c5c" stroke-width="1"/><rect x="629.5" y="34.5" width="17" height="17" fill="#f0f0f0" stroke="#5c5c5c" stroke-width="1"/><rect x="646.5" y="34.5" width="17" height="17" fill="#ece0b8" stroke="#5c5c5c" stroke-width="1"/><rect x="663.5" y="34.5" width="17" height="17" fill="#d85c20" stroke="#5c5c5c" stroke-width="1"/><rect x="680.5" y="34.5" width="17" height="17" fill="#e06830" stroke="#5c5c5c" stroke-width="1"/><rect x="697.5" y="34.5" width="17" height="17" fill="#fcd098" stroke="#5c5c5c" stroke-width="1"/><rect x="714.5" y="34.5" width="17" height="17" fill="#ffe800" stroke="#5c5c5c" stroke-width="1"/><rect x="731.5" y="34.5" width="17" height="17" fill="#9848a0" stroke="#5c5c5c" stroke-width="1"/><rect x="748.5" y="34.5" width="17" height="17" fill="#a02090" stroke="#5c5c5c" stroke-width="1"/><rect x="765.5" y="34.5" width="17" height="17" fill="#903898" stroke="#5c5c5c" stroke-width="1"/><rect x="782.5" y="34.5" width="17" height="17" fill="#7c2880" stroke="#5c5c5c" stroke-width="1"/><rect x="799.5" y="34.5" width="17" height="17" fill="#00d058" stroke="#5c5c5c" stroke-width="1"/><rect x="816.5" y="34.5" width="17" height="17" fill="#18b048" stroke="#5c5c5c" stroke-width="1"/><rect x="833.5" y="34.5" width="17" height="17" fill="#30b050" stroke="#5c5c5c" stroke-width="1"/><rect x="850.5" y="34.5" width="17" height="17" fill="#50b860" stroke="#5c5c5c" stroke-width="1"/><rect x="867.5" y="34.5" width="17" height="17" fill="#8c3c90" stroke="#5c5c5c" stroke-width="1"/><rect x="884.5" y="34.5" width="17" height="17" fill="#fcec40" stroke="#5c5c5c" stroke-width="1"/><rect x="901.5" y="34.5" width="17" height="17" fill="#f8e858" stroke="#5c5c5c" stroke-width="1"/><rect x="918.5" y="34.5" width="17" height="17" fill="#fce800" stroke="#5c5c5c" stroke-width="1"/><rect x="935.5" y="34.5" width="17" height="17" fill="#fae830" stroke="#5c5c5c" stroke-width="1"/><rect x="952.5" y="34.5" width="17" height="17" fill="#fbec50" stroke="#5c5c5c" stroke-width="1"/><rect x="969.5" y="34.5" width="17" height="17" fill="#e01c24" stroke="#5c5c5c" stroke-width="1"/><rect x="986.5" y="34.5" width="17" height="17" fill="#d0d0d0" stroke="#5c5c5c" stroke-width="1"/><rect x="1003.5" y="34.5" width="17" height="17" fill="#806850" stroke="#5c5c5c" stroke-width="1"/><rect x="1020.5" y="34.5" width="17" height="17" fill="#f87040" stroke="#5c5c5c" stroke-width="1"/><rect x="1037.5" y="34.5" width="17" height="17" fill="#00a048" stroke="#5c5c5c" stroke-width="1"/><rect x="1054.5" y="34.5" width="17" height="17" fill="#c8c8cc" stroke="#5c5c5c" stroke-width="1"/><rect x="1071.5" y="34.5" width="17" height="17" fill="#f4e4d0" stroke="#5c5c5c" stroke-width="1"/><rect x="1088.5" y="34.5" width="17" height="17" fill="#d01c24" stroke="#5c5c5c" stroke-width="1"/><rect x="1105.5" y="34.5" width="17" height="17" fill="#c81c24" stroke="#5c5c5c" stroke-width="1"/><rect x="1122.5" y="34.5" width="17" height="17" fill="#a05840" stroke="#5c5c5c" stroke-width="1"/><rect x="1139.5" y="34.5" width="17" height="17" fill="#884888" stroke="#5c5c5c" stroke-width="1"/><rect x="1156.5" y="34.5" width="17" height="17" fill="#dc9428" stroke="#5c5c5c" stroke-width="1"/><rect x="1173.5" y="34.5" width="17" height="17" fill="#eca830" stroke="#5c5c5c" stroke-width="1"/><rect x="1190.5" y="34.5" width="17" height="17" fill="#ecb858" stroke="#5c5c5c" stroke-width="1"/><rect x="1207.5" y="34.5" width="17" height="17" fill="#f4c878" stroke="#5c5c5c" stroke-width="1"/><rect x="0.5" y="51.5" width="17" height="17" fill="#e84050" stroke="#5c5c5c" stroke-width="1"/><rect x="17.5" y="51.5" width="17" height="17" fill="#e04050" stroke="#5c5c5c" stroke-width="1"/><rect x="34.5" y="51.5" width="17" height="17" fill="#f06870" stroke="#5c5c5c" stroke-width="1"/><rect x="51.5" y="51.5" width="17" height="17" fill="#e0d4a0" stroke="#5c5c5c" stroke-width="1"/><rect x="68.5" y="51.5" width="17" height="17" fill="#d0c490" stroke="#5c5c5c" stroke-width="1"/><rect x="85.5" y="51.5" width="17" height="17" fill="#d47440" stroke="#5c5c5c" stroke-width="1"/><rect x="102.5" y="51.5" width="17" height="17" fill="#e09870" stroke="#5c5c5c" stroke-width="1"/><rect x="119.5" y="51.5" width="17" height="17" fill="#c8b880" stroke="#5c5c5c" stroke-width="1"/><rect x="136.5" y="51.5" width="17" height="17" fill="#e03048" stroke="#5c5c5c" stroke-width="1"/><rect x="153.5" y="51.5" width="17" height="17" fill="#e84050" stroke="#5c5c5c" stroke-width="1"/></svg>
<div style="position:absolute;left:1264px;top:586px;width:5px;height:72px;background:#eeeeee;"></div>
<div style="position:absolute;left:30px;top:658px;width:1240px;height:1px;background:#c8c8c8;"></div>
<div style="position:absolute;left:30px;top:587px;width:9px;height:71px;background:#efefef;border-left:1px solid #d4d4d4;"></div>
<svg style="position:absolute;left:32px;top:589px;" width="6" height="68" viewBox="0 0 6 68"><path d="M2 4 L4 2 V4 Z" fill="#a8a8a8"/><path d="M2 8 L4 6 V8 Z" fill="#a8a8a8"/><path d="M2 12 L4 10 V12 Z" fill="#a8a8a8"/><path d="M2 16 L4 14 V16 Z" fill="#a8a8a8"/><path d="M2 20 L4 18 V20 Z" fill="#a8a8a8"/><path d="M2 24 L4 22 V24 Z" fill="#a8a8a8"/><path d="M2 28 L4 26 V28 Z" fill="#a8a8a8"/><path d="M2 32 L4 30 V32 Z" fill="#a8a8a8"/><path d="M2 36 L4 34 V36 Z" fill="#a8a8a8"/><path d="M2 40 L4 38 V40 Z" fill="#a8a8a8"/><path d="M2 44 L4 42 V44 Z" fill="#a8a8a8"/><path d="M2 48 L4 46 V48 Z" fill="#a8a8a8"/><path d="M2 52 L4 50 V52 Z" fill="#a8a8a8"/><path d="M2 56 L4 54 V56 Z" fill="#a8a8a8"/><path d="M2 60 L4 58 V60 Z" fill="#a8a8a8"/><path d="M2 64 L4 62 V64 Z" fill="#a8a8a8"/></svg>
<svg style="position:absolute;left:1296px;top:102px;" width="70" height="546" viewBox="0 0 70 546"><defs><linearGradient id="gbtn2" x1="0" y1="0" x2="1" y2="1"><stop offset="0" stop-color="#ffffff"/><stop offset="1" stop-color="#b8b8b8"/></linearGradient></defs><g transform="translate(0,0)"><rect x="0" y="0" width="17" height="17" fill="#fff"/><path d="M0.5 17 V0.5 H16" fill="none" stroke="#a0a0a0" stroke-width="1"/><rect x="2.5" y="2.5" width="12.5" height="12.5" fill="url(#gbtn2)" stroke="#111" stroke-width="1.3"/><path d="M7 6.5 L10.5 8.8 L7 11 Z" fill="#111"/></g><rect x="17.5" y="0.5" width="17" height="17" fill="#0090d8" stroke="#5c5c5c" stroke-width="1"/><rect x="34.5" y="0.5" width="17" height="17" fill="#d0a868" stroke="#5c5c5c" stroke-width="1"/><rect x="51.5" y="0.5" width="17" height="17" fill="#a078b8" stroke="#5c5c5c" stroke-width="1"/><g transform="translate(0,17)"><rect width="17" height="17" fill="#f4f4f4"/><path d="M4 14 L11 7" stroke="#c8c8c8" stroke-width="2"/><path d="M9 5 L12 2 L15 5 L12 8 Z" fill="#c0c0c0"/><path d="M8 6 L11 9" stroke="#c0c0c0" stroke-width="2"/></g><rect x="17.5" y="17.5" width="17" height="17" fill="#90d8f8" stroke="#5c5c5c" stroke-width="1"/><rect x="34.5" y="17.5" width="17" height="17" fill="#f08048" stroke="#5c5c5c" stroke-width="1"/><rect x="51.5" y="17.5" width="17" height="17" fill="#a02890" stroke="#5c5c5c" stroke-width="1"/><g transform="translate(0,34)"><rect x="0.5" y="0.5" width="16" height="16" fill="#fff" stroke="#333" stroke-width="1"/><path d="M1 1 L16 16 M16 1 L1 16" stroke="#222" stroke-width="1"/></g><rect x="17.5" y="34.5" width="17" height="17" fill="#a8c8d8" stroke="#5c5c5c" stroke-width="1"/><rect x="34.5" y="34.5" width="17" height="17" fill="#f8a048" stroke="#5c5c5c" stroke-width="1"/><rect x="51.5" y="34.5" width="17" height="17" fill="#884090" stroke="#5c5c5c" stroke-width="1"/><rect x="0.5" y="51.5" width="17" height="17" fill="#202020" stroke="#5c5c5c" stroke-width="1"/><rect x="17.5" y="51.5" width="17" height="17" fill="#8098a8" stroke="#5c5c5c" stroke-width="1"/><rect x="34.5" y="51.5" width="17" height="17" fill="#f8a878" stroke="#5c5c5c" stroke-width="1"/><rect x="51.5" y="51.5" width="17" height="17" fill="#8050a0" stroke="#5c5c5c" stroke-width="1"/><rect x="0.5" y="68.5" width="17" height="17" fill="#404040" stroke="#5c5c5c" stroke-width="1"/><rect x="17.5" y="68.5" width="17" height="17" fill="#607080" stroke="#5c5c5c" stroke-width="1"/><rect x="34.5" y="68.5" width="17" height="17" fill="#f8c800" stroke="#5c5c5c" stroke-width="1"/><rect x="51.5" y="68.5" width="17" height="17" fill="#684878" stroke="#5c5c5c" stroke-width="1"/><rect x="0.5" y="85.5" width="17" height="17" fill="#585858" stroke="#5c5c5c" stroke-width="1"/><rect x="17.5" y="85.5" width="17" height="17" fill="#404c58" stroke="#5c5c5c" stroke-width="1"/><rect x="34.5" y="85.5" width="17" height="17" fill="#f8d0a0" stroke="#5c5c5c" stroke-width="1"/><rect x="51.5" y="85.5" width="17" height="17" fill="#6c3c88" stroke="#5c5c5c" stroke-width="1"/><rect x="0.5" y="102.5" width="17" height="17" fill="#686868" stroke="#5c5c5c" stroke-width="1"/><rect x="17.5" y="102.5" width="17" height="17" fill="#407068" stroke="#5c5c5c" stroke-width="1"/><rect x="34.5" y="102.5" width="17" height="17" fill="#806050" stroke="#5c5c5c" stroke-width="1"/><rect x="51.5" y="102.5" width="17" height="17" fill="#000000" stroke="#5c5c5c" stroke-width="1"/><rect x="0.5" y="119.5" width="17" height="17" fill="#808488" stroke="#5c5c5c" stroke-width="1"/><rect x="17.5" y="119.5" width="17" height="17" fill="#40806c" stroke="#5c5c5c" stroke-width="1"/><rect x="34.5" y="119.5" width="17" height="17" fill="#a05840" stroke="#5c5c5c" stroke-width="1"/><rect x="0.5" y="136.5" width="17" height="17" fill="#909498" stroke="#5c5c5c" stroke-width="1"/><rect x="17.5" y="136.5" width="17" height="17" fill="#609088" stroke="#5c5c5c" stroke-width="1"/><rect x="34.5" y="136.5" width="17" height="17" fill="#c86838" stroke="#5c5c5c" stroke-width="1"/><rect x="0.5" y="153.5" width="17" height="17" fill="#a4a8ac" stroke="#5c5c5c" stroke-width="1"/><rect x="17.5" y="153.5" width="17" height="17" fill="#50a090" stroke="#5c5c5c" stroke-width="1"/><rect x="34.5" y="153.5" width="17" height="17" fill="#f88868" stroke="#5c5c5c" stroke-width="1"/><rect x="0.5" y="170.5" width="17" height="17" fill="#b8babc" stroke="#5c5c5c" stroke-width="1"/><rect x="17.5" y="170.5" width="17" height="17" fill="#50a070" stroke="#5c5c5c" stroke-width="1"/><rect x="34.5" y="170.5" width="17" height="17" fill="#f8b098" stroke="#5c5c5c" stroke-width="1"/><rect x="0.5" y="187.5" width="17" height="17" fill="#d0d2d4" stroke="#5c5c5c" stroke-width="1"/><rect x="17.5" y="187.5" width="17" height="17" fill="#50c0d0" stroke="#5c5c5c" stroke-width="1"/><rect x="34.5" y="187.5" width="17" height="17" fill="#f8d8c8" stroke="#5c5c5c" stroke-width="1"/><rect x="0.5" y="204.5" width="17" height="17" fill="#e4e6e8" stroke="#5c5c5c" stroke-width="1"/><rect x="17.5" y="204.5" width="17" height="17" fill="#40a0b0" stroke="#5c5c5c" stroke-width="1"/><rect x="34.5" y="204.5" width="17" height="17" fill="#a07070" stroke="#5c5c5c" stroke-width="1"/><rect x="0.5" y="221.5" width="17" height="17" fill="#ffffff" stroke="#5c5c5c" stroke-width="1"/><rect x="17.5" y="221.5" width="17" height="17" fill="#a8c0b0" stroke="#5c5c5c" stroke-width="1"/><rect x="34.5" y="221.5" width="17" height="17" fill="#c87070" stroke="#5c5c5c" stroke-width="1"/><rect x="0.5" y="238.5" width="17" height="17" fill="#283090" stroke="#5c5c5c" stroke-width="1"/><rect x="17.5" y="238.5" width="17" height="17" fill="#c8e8d8" stroke="#5c5c5c" stroke-width="1"/><rect x="34.5" y="238.5" width="17" height="17" fill="#c87080" stroke="#5c5c5c" stroke-width="1"/><rect x="0.5" y="255.5" width="17" height="17" fill="#00b0e8" stroke="#5c5c5c" stroke-width="1"/><rect x="17.5" y="255.5" width="17" height="17" fill="#98d0a8" stroke="#5c5c5c" stroke-width="1"/><rect x="34.5" y="255.5" width="17" height="17" fill="#f01050" stroke="#5c5c5c" stroke-width="1"/><rect x="0.5" y="272.5" width="17" height="17" fill="#00a050" stroke="#5c5c5c" stroke-width="1"/><rect x="17.5" y="272.5" width="17" height="17" fill="#809888" stroke="#5c5c5c" stroke-width="1"/><rect x="34.5" y="272.5" width="17" height="17" fill="#f08880" stroke="#5c5c5c" stroke-width="1"/><rect x="0.5" y="289.5" width="17" height="17" fill="#fff000" stroke="#5c5c5c" stroke-width="1"/><rect x="17.5" y="289.5" width="17" height="17" fill="#809070" stroke="#5c5c5c" stroke-width="1"/><rect x="34.5" y="289.5" width="17" height="17" fill="#f06078" stroke="#5c5c5c" stroke-width="1"/><rect x="0.5" y="306.5" width="17" height="17" fill="#ee2028" stroke="#5c5c5c" stroke-width="1"/><rect x="17.5" y="306.5" width="17" height="17" fill="#a8b878" stroke="#5c5c5c" stroke-width="1"/><rect x="34.5" y="306.5" width="17" height="17" fill="#d09090" stroke="#5c5c5c" stroke-width="1"/><rect x="0.5" y="323.5" width="17" height="17" fill="#e8008c" stroke="#5c5c5c" stroke-width="1"/><rect x="17.5" y="323.5" width="17" height="17" fill="#a8b890" stroke="#5c5c5c" stroke-width="1"/><rect x="34.5" y="323.5" width="17" height="17" fill="#805068" stroke="#5c5c5c" stroke-width="1"/><rect x="0.5" y="340.5" width="17" height="17" fill="#a04890" stroke="#5c5c5c" stroke-width="1"/><rect x="17.5" y="340.5" width="17" height="17" fill="#a8d040" stroke="#5c5c5c" stroke-width="1"/><rect x="34.5" y="340.5" width="17" height="17" fill="#985080" stroke="#5c5c5c" stroke-width="1"/><rect x="0.5" y="357.5" width="17" height="17" fill="#f88020" stroke="#5c5c5c" stroke-width="1"/><rect x="17.5" y="357.5" width="17" height="17" fill="#d0e088" stroke="#5c5c5c" stroke-width="1"/><rect x="34.5" y="357.5" width="17" height="17" fill="#f8b0d0" stroke="#5c5c5c" stroke-width="1"/><rect x="0.5" y="374.5" width="17" height="17" fill="#f8b0b8" stroke="#5c5c5c" stroke-width="1"/><rect x="17.5" y="374.5" width="17" height="17" fill="#585848" stroke="#5c5c5c" stroke-width="1"/><rect x="34.5" y="374.5" width="17" height="17" fill="#c890b0" stroke="#5c5c5c" stroke-width="1"/><rect x="0.5" y="391.5" width="17" height="17" fill="#887068" stroke="#5c5c5c" stroke-width="1"/><rect x="17.5" y="391.5" width="17" height="17" fill="#808070" stroke="#5c5c5c" stroke-width="1"/><rect x="34.5" y="391.5" width="17" height="17" fill="#a898a0" stroke="#5c5c5c" stroke-width="1"/><rect x="0.5" y="408.5" width="17" height="17" fill="#c8c8e8" stroke="#5c5c5c" stroke-width="1"/><rect x="17.5" y="408.5" width="17" height="17" fill="#a8a890" stroke="#5c5c5c" stroke-width="1"/><rect x="34.5" y="408.5" width="17" height="17" fill="#d0b0c0" stroke="#5c5c5c" stroke-width="1"/><rect x="0.5" y="425.5" width="17" height="17" fill="#9898c8" stroke="#5c5c5c" stroke-width="1"/><rect x="17.5" y="425.5" width="17" height="17" fill="#a8a078" stroke="#5c5c5c" stroke-width="1"/><rect x="34.5" y="425.5" width="17" height="17" fill="#a86898" stroke="#5c5c5c" stroke-width="1"/><rect x="0.5" y="442.5" width="17" height="17" fill="#6890c8" stroke="#5c5c5c" stroke-width="1"/><rect x="17.5" y="442.5" width="17" height="17" fill="#d8d078" stroke="#5c5c5c" stroke-width="1"/><rect x="34.5" y="442.5" width="17" height="17" fill="#c058a0" stroke="#5c5c5c" stroke-width="1"/><rect x="0.5" y="459.5" width="17" height="17" fill="#7070b0" stroke="#5c5c5c" stroke-width="1"/><rect x="17.5" y="459.5" width="17" height="17" fill="#fff080" stroke="#5c5c5c" stroke-width="1"/><rect x="34.5" y="459.5" width="17" height="17" fill="#d080b8" stroke="#5c5c5c" stroke-width="1"/><rect x="0.5" y="476.5" width="17" height="17" fill="#8078a8" stroke="#5c5c5c" stroke-width="1"/><rect x="17.5" y="476.5" width="17" height="17" fill="#fff8b0" stroke="#5c5c5c" stroke-width="1"/><rect x="34.5" y="476.5" width="17" height="17" fill="#a888b0" stroke="#5c5c5c" stroke-width="1"/><rect x="0.5" y="493.5" width="17" height="17" fill="#485888" stroke="#5c5c5c" stroke-width="1"/><rect x="17.5" y="493.5" width="17" height="17" fill="#fff8e0" stroke="#5c5c5c" stroke-width="1"/><rect x="34.5" y="493.5" width="17" height="17" fill="#c8a0c8" stroke="#5c5c5c" stroke-width="1"/><rect x="0.5" y="510.5" width="17" height="17" fill="#504868" stroke="#5c5c5c" stroke-width="1"/><rect x="17.5" y="510.5" width="17" height="17" fill="#a88868" stroke="#5c5c5c" stroke-width="1"/><rect x="34.5" y="510.5" width="17" height="17" fill="#604868" stroke="#5c5c5c" stroke-width="1"/><rect x="0.5" y="527.5" width="17" height="17" fill="#607898" stroke="#5c5c5c" stroke-width="1"/><rect x="17.5" y="527.5" width="17" height="17" fill="#d08858" stroke="#5c5c5c" stroke-width="1"/><rect x="34.5" y="527.5" width="17" height="17" fill="#806888" stroke="#5c5c5c" stroke-width="1"/></svg>
<div style="position:absolute;left:1300px;top:97px;width:62px;height:3px;background:repeating-linear-gradient(90deg,#b0b0b0 0 2px,transparent 2px 4px);"></div>
<div style="position:absolute;left:1296px;top:648px;width:70px;height:11px;background:#ececec;"></div>
</body></html>
